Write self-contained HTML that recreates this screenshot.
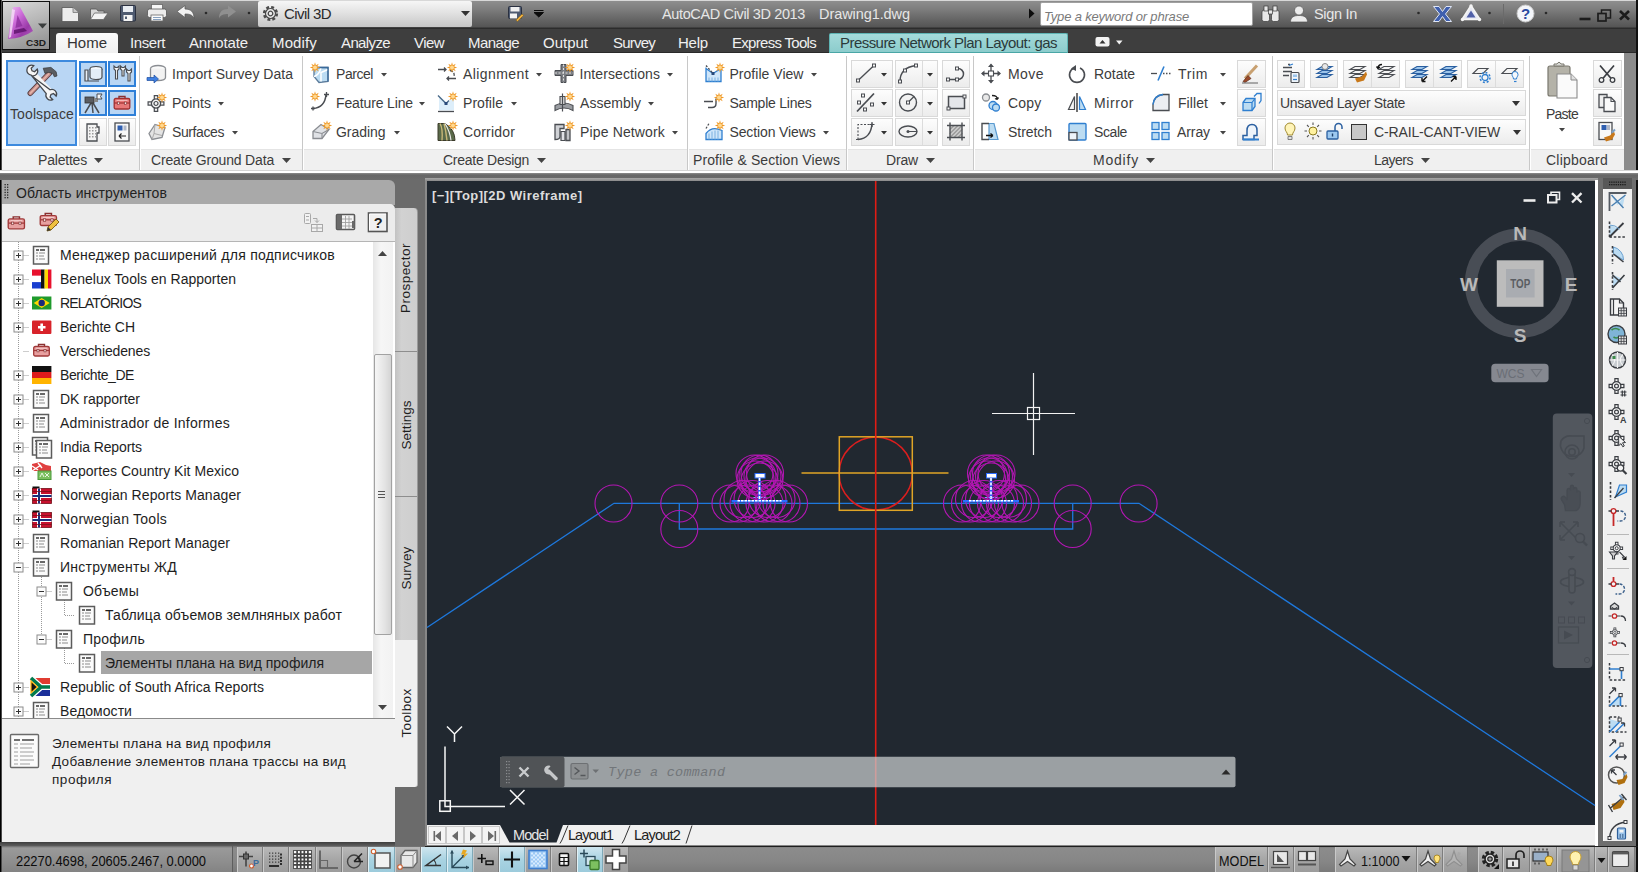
<!DOCTYPE html><html><head><meta charset="utf-8"><title>AutoCAD Civil 3D 2013 - Drawing1.dwg</title><style>
html,body{margin:0;padding:0;background:#6b6b6b;}
body{width:1638px;height:872px;position:relative;overflow:hidden;font-family:"Liberation Sans","DejaVu Sans",sans-serif;}
div,span,svg{position:absolute;box-sizing:border-box;}
span{white-space:nowrap;}
svg{overflow:visible;}
.rb{border:1px solid #d9d9d9;background:linear-gradient(#fdfdfd,#ececec);}
.sbg{background:linear-gradient(#b9b9b9,#a6a6a6 50%,#9c9c9c);border-left:1px solid #c9c9c9;border-right:1px solid #7d7d7d;}
.sbb{background:linear-gradient(#cfe6ef,#a9d3e2 50%,#9ccbdc);border-left:1px solid #e2f1f6;border-right:1px solid #7fa9b8;}
</style></head><body>
<div style="left:0px;top:0px;width:1638px;height:29px;background:linear-gradient(#d8d8d8 0,#d8d8d8 1px,#8e8e8e 1px,#7e7e7e 9px,#666 19px,#555 27px,#2c2c2c 28px,#2c2c2c 29px);"></div>
<div style="left:0px;top:29px;width:1638px;height:25px;background:linear-gradient(#3e3e3e 0,#3e3e3e 23px,#2a2a2a 23px);"></div>
<div style="left:1.5px;top:1px;width:48.5px;height:49px;background:linear-gradient(160deg,#dadada,#b8b8b8 45%,#8c8c8c);border:1.5px solid #101010;"></div>
<svg style="left:0px;top:0px;z-index:3;" width="1638" height="60" viewBox="0 0 1638 60"><defs><linearGradient id="pa" x1="0" y1="0" x2="1" y2="1"><stop offset="0" stop-color="#f0c8f4"/><stop offset=".35" stop-color="#d070dc"/><stop offset=".7" stop-color="#9a3aa8"/><stop offset="1" stop-color="#b060c0"/></linearGradient></defs><path d="M13 7h7l13 24q-10 7-25 8z" fill="url(#pa)"/><path d="M17.500 15l5 11-7 2z" fill="#8a2a9a" opacity=".75"/><path d="M14 30l10-2 3 3-13 3z" fill="#5a1068" opacity=".8"/><path d="M12 9l3 1-4 27-2 1z" fill="#f6e0f8" opacity=".8"/><path d="M38 23.500h9l-4.500 5z" fill="#3a3d3d"/><text x="26" y="46" font-family="Liberation Sans,sans-serif" font-weight="bold" font-size="9.500" fill="#1c1c1c" textLength="20" lengthAdjust="spacingAndGlyphs">C3D</text><path d="M62 7.500h11l5.500 5v9H62z" fill="#ececec" stroke="#555" stroke-width=".800"/><path d="M73 7.500v5h5.500" fill="#c8c8c8" stroke="#777" stroke-width=".800"/><path d="M90.500 9h6l1.500 2h6v8.500h-13.500z" fill="#d8d8d8" stroke="#555" stroke-width=".800"/><path d="M90.500 19.500l4-6.500h13.500l-4.500 6.500z" fill="#f4f4f4" stroke="#666" stroke-width=".800"/><rect x="120.500" y="5.500" width="15" height="15.500" rx="1" fill="#4e5a70" stroke="#2a3040" stroke-width="1"/><rect x="123" y="6" width="10" height="6" fill="#e8ecf2"/><rect x="123.500" y="15" width="9" height="6" fill="#f4f4f4"/><rect x="125" y="16.500" width="2" height="2.500" fill="#4e5a70"/><rect x="151.500" y="4.500" width="11" height="5" fill="#f6f6f6" stroke="#666" stroke-width=".800"/><rect x="147.500" y="9" width="19" height="8.500" rx="2" fill="#ececec" stroke="#555" stroke-width=".800"/><rect x="151" y="15" width="12" height="6" fill="#fafafa" stroke="#666" stroke-width=".800"/><path d="M153 17.500h8M153 19.500h8" stroke="#6a8ab0" stroke-width=".800"/><path d="M177 11.500l8-6v3.500c6 0 9 3 9 9.500-1.500-3.500-4-4.500-9-4.500v3.500z" fill="#f2f2f2" stroke="#555" stroke-width=".700"/><path d="M236 11.500l-8-6v3.500c-6 0-9 3-9 9.500 1.500-3.500 4-4.500 9-4.500v3.500z" fill="#909090"/><circle cx="206" cy="13" r="1.300" fill="#2a2a2a"/><circle cx="249" cy="13" r="1.300" fill="#2a2a2a"/></svg>
<div style="left:258px;top:1px;width:214px;height:26px;background:linear-gradient(#f6f6f6,#e2e2e2 45%,#c6c6c6);border-radius:2px;"></div>
<svg style="left:0px;top:0px;" width="1638" height="60" viewBox="0 0 1638 60"><g transform="translate(270.500,13.500)"><circle r="6" fill="none" stroke="#4a4a4a" stroke-width="3.200" stroke-dasharray="2.700 2"/><circle r="5" fill="#ececec" stroke="#4a4a4a" stroke-width="1.200"/><circle r="2.300" fill="#ececec" stroke="#4a4a4a" stroke-width="1.300"/></g><path d="M461 11h9l-4.500 5z" fill="#333"/><rect x="508.500" y="6.500" width="13" height="12" rx="1" fill="#4e5a70" stroke="#2a3040" stroke-width="1"/><rect x="510.500" y="7" width="9" height="4.500" fill="#f0f0f0"/><rect x="510" y="13.500" width="7" height="5" fill="#f4f4f4"/><path d="M516 20l6-6 1.500 1.500-6 6z" fill="#f0b040" stroke="#7a5a10" stroke-width=".500"/><path d="M534 10.500h9.500M534 12.500h9.500l-4.750 4.500z" fill="#0c0c0c" stroke="#0c0c0c" stroke-width="1"/><path d="M1029 8.500v10l5.500-5z" fill="#0c0c0c"/></svg>
<span style="left:284.0px;top:6.3px;font-size:15px;line-height:15px;color:#2a2a2a;letter-spacing:-0.584px;">Civil 3D</span>
<span style="left:662.0px;top:7.2px;font-size:14.5px;line-height:14.5px;color:#e6e6e6;letter-spacing:-0.367px;">AutoCAD Civil 3D 2013</span>
<span style="left:819.0px;top:7.2px;font-size:14.5px;line-height:14.5px;color:#e6e6e6;letter-spacing:-0.073px;">Drawing1.dwg</span>
<div style="left:1040px;top:2px;width:213px;height:24px;background:#fff;border:1px solid #a0a0a0;border-radius:2px;"></div>
<span style="left:1044.0px;top:9.5px;font-size:13px;line-height:13px;color:#7a7a7a;font-style:italic;letter-spacing:-0.180px;">Type a keyword or phrase</span>
<span style="left:1314.0px;top:7.2px;font-size:14.5px;line-height:14.5px;color:#e8e8e8;letter-spacing:-0.306px;">Sign In</span>
<svg style="left:0px;top:0px;" width="1638" height="60" viewBox="0 0 1638 60"><g fill="#e8e8e8" stroke="#3a3a3a" stroke-width=".700"><rect x="1262" y="10" width="7.500" height="11.500" rx="2"/><rect x="1271.500" y="10" width="7.500" height="11.500" rx="2"/><rect x="1264" y="6" width="4" height="5"/><rect x="1273" y="6" width="4" height="5"/><rect x="1268.500" y="10" width="4" height="4"/></g><g fill="#ececec" stroke="#555" stroke-width=".700"><circle cx="1299" cy="10.500" r="4.500"/><path d="M1290.500 22c0-5 3.500-6.500 8.500-6.500s8.500 1.500 8.500 6.500z"/></g><circle cx="1418.500" cy="13" r="1.300" fill="#2a2a2a"/><circle cx="1489.500" cy="13" r="1.300" fill="#2a2a2a"/><circle cx="1546" cy="13" r="1.300" fill="#2a2a2a"/><path d="M1433.500 6.500h5.500l3.500 5 3.500-5h5.500l-6 7.500 6 7.500h-5.500l-3.500-5-3.500 5h-5.500l6-7.500z" fill="#3f5fae" stroke="#dfe6f5" stroke-width="1"/><path d="M1471 5.500l9 14h-18z" fill="#e8eaf4" stroke="#f4f4f4" stroke-width="1.600" stroke-linejoin="round"/><path d="M1471 10.500l4.500 7h-9z" fill="#5060a8"/><circle cx="1471" cy="6" r="1.700" fill="#f4f4f4"/><circle cx="1462.500" cy="19.500" r="1.700" fill="#f4f4f4"/><circle cx="1479.500" cy="19.500" r="1.700" fill="#f4f4f4"/><path d="M1503.500 4v20" stroke="#6a6a6a" stroke-width="1"/><circle cx="1525.500" cy="13.500" r="8.500" fill="#f4f6fa" stroke="#c8c8c8" stroke-width="1"/><text x="1525.500" y="19" text-anchor="middle" font-family="Liberation Sans,sans-serif" font-weight="bold" font-size="15" fill="#2a4aa0">?</text><path d="M1579.500 19h11" stroke="#1c1c1c" stroke-width="2.600"/><rect x="1598" y="13.500" width="8" height="7.500" fill="none" stroke="#1c1c1c" stroke-width="1.700"/><path d="M1601.500 13v-3h9v8h-3.500" fill="none" stroke="#1c1c1c" stroke-width="1.500"/><path d="M1620 11l9 8.500M1629 11l-9 8.500" stroke="#1c1c1c" stroke-width="2.600"/><rect x="1095.500" y="37" width="14" height="9.500" rx="2" fill="#f2f2f2"/><path d="M1099.500 43.500h6l-3-3.500z" fill="#333"/><path d="M1116 40.500h6.500l-3.250 4z" fill="#f2f2f2"/></svg>
<div style="left:56px;top:33px;width:62px;height:21px;background:linear-gradient(#fbfbfb,#efefef);border-radius:3px 3px 0 0;"></div>
<span style="left:67.0px;top:34.8px;font-size:15px;line-height:15px;color:#333;letter-spacing:-0.003px;">Home</span>
<span style="left:130.0px;top:34.8px;font-size:15px;line-height:15px;color:#f0f0f0;letter-spacing:-0.419px;">Insert</span>
<span style="left:189.0px;top:34.8px;font-size:15px;line-height:15px;color:#f0f0f0;letter-spacing:-0.131px;">Annotate</span>
<span style="left:272.0px;top:34.8px;font-size:15px;line-height:15px;color:#f0f0f0;letter-spacing:0.137px;">Modify</span>
<span style="left:341.0px;top:34.8px;font-size:15px;line-height:15px;color:#f0f0f0;letter-spacing:-0.623px;">Analyze</span>
<span style="left:414.0px;top:34.8px;font-size:15px;line-height:15px;color:#f0f0f0;letter-spacing:-0.561px;">View</span>
<span style="left:468.0px;top:34.8px;font-size:15px;line-height:15px;color:#f0f0f0;letter-spacing:-0.534px;">Manage</span>
<span style="left:543.0px;top:34.8px;font-size:15px;line-height:15px;color:#f0f0f0;letter-spacing:-0.005px;">Output</span>
<span style="left:613.0px;top:34.8px;font-size:15px;line-height:15px;color:#f0f0f0;letter-spacing:-0.781px;">Survey</span>
<span style="left:678.0px;top:34.8px;font-size:15px;line-height:15px;color:#f0f0f0;letter-spacing:-0.213px;">Help</span>
<span style="left:732.0px;top:34.8px;font-size:15px;line-height:15px;color:#f0f0f0;letter-spacing:-0.700px;">Express Tools</span>
<div style="left:829px;top:33px;width:239px;height:21px;background:linear-gradient(#a4dada,#8ccccc);border:1px solid #5fb4b4;border-bottom:2px solid #4aa6a6;border-radius:2px 2px 0 0;"></div>
<span style="left:840.0px;top:34.8px;font-size:15px;line-height:15px;color:#2b3a3a;letter-spacing:-0.549px;">Pressure Network Plan Layout: gas</span>
<div style="left:2px;top:53px;width:1622px;height:118px;background:#fff;"></div>
<div style="left:2px;top:149px;width:1622px;height:22px;background:#f0f0f0;border-top:1px solid #e4e4e4;"></div>
<div style="left:1624px;top:53px;width:12px;height:120px;background:#8c8c8c;"></div>
<div style="left:1636px;top:0px;width:2px;height:872px;background:#111;"></div>
<div style="left:0px;top:0px;width:2px;height:872px;background:linear-gradient(90deg,#000 0,#000 1px,#4a4a4a 1px);"></div>
<div style="left:0px;top:170px;width:1638px;height:10px;background:linear-gradient(#d4d4d4 0,#d4d4d4 1px,#fff 1px,#fff 2.5px,#8c8c8c 3px,#666 5px,#6b6b6b 100%);"></div>
<div style="left:139px;top:56px;width:2px;height:114px;background:linear-gradient(90deg,#c8c8c8 0,#c8c8c8 1px,#fff 1px);"></div>
<div style="left:301.5px;top:56px;width:2px;height:114px;background:linear-gradient(90deg,#c8c8c8 0,#c8c8c8 1px,#fff 1px);"></div>
<div style="left:686.5px;top:56px;width:2px;height:114px;background:linear-gradient(90deg,#c8c8c8 0,#c8c8c8 1px,#fff 1px);"></div>
<div style="left:846px;top:56px;width:2px;height:114px;background:linear-gradient(90deg,#c8c8c8 0,#c8c8c8 1px,#fff 1px);"></div>
<div style="left:973px;top:56px;width:2px;height:114px;background:linear-gradient(90deg,#c8c8c8 0,#c8c8c8 1px,#fff 1px);"></div>
<div style="left:1272px;top:56px;width:2px;height:114px;background:linear-gradient(90deg,#c8c8c8 0,#c8c8c8 1px,#fff 1px);"></div>
<div style="left:1529px;top:56px;width:2px;height:114px;background:linear-gradient(90deg,#c8c8c8 0,#c8c8c8 1px,#fff 1px);"></div>
<div style="left:6px;top:60px;width:71px;height:86px;background:#b9d6f4;border:2px solid #3d8ade;"></div>
<span style="left:10.0px;top:107.1px;font-size:14px;line-height:14px;color:#3c3c3c;letter-spacing:0.107px;">Toolspace</span>
<div style="left:79px;top:61px;width:28px;height:26px;background:#b9d6f4;border:2px solid #2f80d8;"></div>
<div style="left:108px;top:61px;width:28px;height:26px;background:#b9d6f4;border:2px solid #2f80d8;"></div>
<div style="left:79px;top:90px;width:28px;height:26px;background:#b9d6f4;border:2px solid #2f80d8;"></div>
<div style="left:108px;top:90px;width:28px;height:26px;background:#b9d6f4;border:2px solid #2f80d8;"></div>
<div class="rb" style="left:79px;top:118px;width:28px;height:28px;"></div>
<div class="rb" style="left:108px;top:118px;width:28px;height:28px;"></div>
<span style="left:172.0px;top:67.1px;font-size:14px;line-height:14px;color:#3c3c3c;letter-spacing:0.022px;">Import Survey Data</span>
<span style="left:172.0px;top:96.1px;font-size:14px;line-height:14px;color:#3c3c3c;letter-spacing:0.015px;">Points</span>
<svg style="left:218px;top:102.0px;" width="6" height="4" viewBox="0 0 6 4"><path d="M0 0h6l-3 3.6z" fill="#444"/></svg>
<span style="left:172.0px;top:125.1px;font-size:14px;line-height:14px;color:#3c3c3c;letter-spacing:-0.406px;">Surfaces</span>
<svg style="left:231.5px;top:131.0px;" width="6" height="4" viewBox="0 0 6 4"><path d="M0 0h6l-3 3.6z" fill="#444"/></svg>
<span style="left:336.0px;top:67.1px;font-size:14px;line-height:14px;color:#3c3c3c;letter-spacing:-0.447px;">Parcel</span>
<svg style="left:381px;top:73.0px;" width="6" height="4" viewBox="0 0 6 4"><path d="M0 0h6l-3 3.6z" fill="#444"/></svg>
<span style="left:336.0px;top:96.1px;font-size:14px;line-height:14px;color:#3c3c3c;letter-spacing:-0.134px;">Feature Line</span>
<svg style="left:419px;top:102.0px;" width="6" height="4" viewBox="0 0 6 4"><path d="M0 0h6l-3 3.6z" fill="#444"/></svg>
<span style="left:336.0px;top:125.1px;font-size:14px;line-height:14px;color:#3c3c3c;letter-spacing:-0.044px;">Grading</span>
<svg style="left:393.5px;top:131.0px;" width="6" height="4" viewBox="0 0 6 4"><path d="M0 0h6l-3 3.6z" fill="#444"/></svg>
<span style="left:463.0px;top:67.1px;font-size:14px;line-height:14px;color:#3c3c3c;letter-spacing:0.416px;">Alignment</span>
<svg style="left:536px;top:73.0px;" width="6" height="4" viewBox="0 0 6 4"><path d="M0 0h6l-3 3.6z" fill="#444"/></svg>
<span style="left:463.0px;top:96.1px;font-size:14px;line-height:14px;color:#3c3c3c;letter-spacing:0.045px;">Profile</span>
<svg style="left:510.5px;top:102.0px;" width="6" height="4" viewBox="0 0 6 4"><path d="M0 0h6l-3 3.6z" fill="#444"/></svg>
<span style="left:463.0px;top:125.1px;font-size:14px;line-height:14px;color:#3c3c3c;letter-spacing:0.179px;">Corridor</span>
<span style="left:579.5px;top:67.1px;font-size:14px;line-height:14px;color:#3c3c3c;letter-spacing:0.087px;">Intersections</span>
<svg style="left:667px;top:73.0px;" width="6" height="4" viewBox="0 0 6 4"><path d="M0 0h6l-3 3.6z" fill="#444"/></svg>
<span style="left:580.0px;top:96.1px;font-size:14px;line-height:14px;color:#3c3c3c;letter-spacing:0.040px;">Assembly</span>
<svg style="left:648px;top:102.0px;" width="6" height="4" viewBox="0 0 6 4"><path d="M0 0h6l-3 3.6z" fill="#444"/></svg>
<span style="left:580.0px;top:125.1px;font-size:14px;line-height:14px;color:#3c3c3c;letter-spacing:0.145px;">Pipe Network</span>
<svg style="left:672px;top:131.0px;" width="6" height="4" viewBox="0 0 6 4"><path d="M0 0h6l-3 3.6z" fill="#444"/></svg>
<span style="left:729.5px;top:67.1px;font-size:14px;line-height:14px;color:#3c3c3c;letter-spacing:0.028px;">Profile View</span>
<svg style="left:811px;top:73.0px;" width="6" height="4" viewBox="0 0 6 4"><path d="M0 0h6l-3 3.6z" fill="#444"/></svg>
<span style="left:729.5px;top:96.1px;font-size:14px;line-height:14px;color:#3c3c3c;letter-spacing:-0.236px;">Sample Lines</span>
<span style="left:729.5px;top:125.1px;font-size:14px;line-height:14px;color:#3c3c3c;letter-spacing:-0.129px;">Section Views</span>
<svg style="left:823px;top:131.0px;" width="6" height="4" viewBox="0 0 6 4"><path d="M0 0h6l-3 3.6z" fill="#444"/></svg>
<span style="left:1008.0px;top:67.1px;font-size:14px;line-height:14px;color:#3c3c3c;letter-spacing:0.441px;">Move</span>
<span style="left:1008.0px;top:96.1px;font-size:14px;line-height:14px;color:#3c3c3c;letter-spacing:0.204px;">Copy</span>
<span style="left:1008.0px;top:125.1px;font-size:14px;line-height:14px;color:#3c3c3c;letter-spacing:-0.050px;">Stretch</span>
<span style="left:1094.0px;top:67.1px;font-size:14px;line-height:14px;color:#3c3c3c;letter-spacing:-0.041px;">Rotate</span>
<span style="left:1094.0px;top:96.1px;font-size:14px;line-height:14px;color:#3c3c3c;letter-spacing:0.576px;">Mirror</span>
<span style="left:1094.0px;top:125.1px;font-size:14px;line-height:14px;color:#3c3c3c;letter-spacing:-0.404px;">Scale</span>
<span style="left:1178.0px;top:67.1px;font-size:14px;line-height:14px;color:#3c3c3c;letter-spacing:0.633px;">Trim</span>
<svg style="left:1220px;top:73.0px;" width="6" height="4" viewBox="0 0 6 4"><path d="M0 0h6l-3 3.6z" fill="#444"/></svg>
<span style="left:1178.0px;top:96.1px;font-size:14px;line-height:14px;color:#3c3c3c;letter-spacing:0.073px;">Fillet</span>
<svg style="left:1220px;top:102.0px;" width="6" height="4" viewBox="0 0 6 4"><path d="M0 0h6l-3 3.6z" fill="#444"/></svg>
<span style="left:1177.0px;top:125.1px;font-size:14px;line-height:14px;color:#3c3c3c;letter-spacing:-0.090px;">Array</span>
<svg style="left:1220px;top:131.0px;" width="6" height="4" viewBox="0 0 6 4"><path d="M0 0h6l-3 3.6z" fill="#444"/></svg>
<span style="left:38.0px;top:153.1px;font-size:14px;line-height:14px;color:#3c3c3c;letter-spacing:-0.198px;">Palettes</span>
<svg style="left:94.0px;top:158px;" width="9" height="5" viewBox="0 0 9 5"><path d="M0 0h9l-4.5 5z" fill="#444"/></svg>
<span style="left:151.0px;top:153.1px;font-size:14px;line-height:14px;color:#3c3c3c;letter-spacing:-0.170px;">Create Ground Data</span>
<svg style="left:282.0px;top:158px;" width="9" height="5" viewBox="0 0 9 5"><path d="M0 0h9l-4.5 5z" fill="#444"/></svg>
<span style="left:443.0px;top:153.1px;font-size:14px;line-height:14px;color:#3c3c3c;letter-spacing:-0.268px;">Create Design</span>
<svg style="left:536.5px;top:158px;" width="9" height="5" viewBox="0 0 9 5"><path d="M0 0h9l-4.5 5z" fill="#444"/></svg>
<span style="left:693.0px;top:153.1px;font-size:14px;line-height:14px;color:#3c3c3c;letter-spacing:0.110px;">Profile &amp; Section Views</span>
<span style="left:886.0px;top:153.1px;font-size:14px;line-height:14px;color:#3c3c3c;letter-spacing:-0.168px;">Draw</span>
<svg style="left:925.5px;top:158px;" width="9" height="5" viewBox="0 0 9 5"><path d="M0 0h9l-4.5 5z" fill="#444"/></svg>
<span style="left:1093.0px;top:153.1px;font-size:14px;line-height:14px;color:#3c3c3c;letter-spacing:0.794px;">Modify</span>
<svg style="left:1145.5px;top:158px;" width="9" height="5" viewBox="0 0 9 5"><path d="M0 0h9l-4.5 5z" fill="#444"/></svg>
<span style="left:1374.0px;top:153.1px;font-size:14px;line-height:14px;color:#3c3c3c;letter-spacing:-0.503px;">Layers</span>
<svg style="left:1420.5px;top:158px;" width="9" height="5" viewBox="0 0 9 5"><path d="M0 0h9l-4.5 5z" fill="#444"/></svg>
<span style="left:1546.0px;top:153.1px;font-size:14px;line-height:14px;color:#3c3c3c;letter-spacing:0.231px;">Clipboard</span>
<div class="rb" style="left:851px;top:60px;width:42px;height:28px;"></div>
<svg style="left:881px;top:72.5px;" width="6" height="4" viewBox="0 0 6 4"><path d="M0 0h6l-3 3.6z" fill="#333"/></svg>
<div class="rb" style="left:895px;top:60px;width:43px;height:28px;"></div>
<div style="left:922px;top:61px;width:1px;height:26px;background:#dcdcdc;"></div>
<svg style="left:927px;top:72.5px;" width="6" height="4" viewBox="0 0 6 4"><path d="M0 0h6l-3 3.6z" fill="#333"/></svg>
<div class="rb" style="left:942px;top:60px;width:28px;height:28px;"></div>
<div class="rb" style="left:1237px;top:60px;width:29px;height:28px;"></div>
<div class="rb" style="left:1593px;top:60px;width:29px;height:28px;"></div>
<div class="rb" style="left:851px;top:89px;width:42px;height:28px;"></div>
<svg style="left:881px;top:101.5px;" width="6" height="4" viewBox="0 0 6 4"><path d="M0 0h6l-3 3.6z" fill="#333"/></svg>
<div class="rb" style="left:895px;top:89px;width:43px;height:28px;"></div>
<div style="left:922px;top:90px;width:1px;height:26px;background:#dcdcdc;"></div>
<svg style="left:927px;top:101.5px;" width="6" height="4" viewBox="0 0 6 4"><path d="M0 0h6l-3 3.6z" fill="#333"/></svg>
<div class="rb" style="left:942px;top:89px;width:28px;height:28px;"></div>
<div class="rb" style="left:1237px;top:89px;width:29px;height:28px;"></div>
<div class="rb" style="left:1593px;top:89px;width:29px;height:28px;"></div>
<div class="rb" style="left:851px;top:118px;width:42px;height:28px;"></div>
<svg style="left:881px;top:130.5px;" width="6" height="4" viewBox="0 0 6 4"><path d="M0 0h6l-3 3.6z" fill="#333"/></svg>
<div class="rb" style="left:895px;top:118px;width:43px;height:28px;"></div>
<div style="left:922px;top:119px;width:1px;height:26px;background:#dcdcdc;"></div>
<svg style="left:927px;top:130.5px;" width="6" height="4" viewBox="0 0 6 4"><path d="M0 0h6l-3 3.6z" fill="#333"/></svg>
<div class="rb" style="left:942px;top:118px;width:28px;height:28px;"></div>
<div class="rb" style="left:1237px;top:118px;width:29px;height:28px;"></div>
<div class="rb" style="left:1593px;top:118px;width:29px;height:28px;"></div>
<div class="rb" style="left:1277px;top:60px;width:28px;height:28px;"></div>
<div class="rb" style="left:1310px;top:60px;width:28px;height:28px;"></div>
<div class="rb" style="left:1343px;top:60px;width:57px;height:28px;"></div>
<div style="left:1371px;top:61px;width:1px;height:26px;background:#dcdcdc;"></div>
<div class="rb" style="left:1405px;top:60px;width:57px;height:28px;"></div>
<div style="left:1433px;top:61px;width:1px;height:26px;background:#dcdcdc;"></div>
<div class="rb" style="left:1467px;top:60px;width:57px;height:28px;"></div>
<div style="left:1495px;top:61px;width:1px;height:26px;background:#dcdcdc;"></div>
<div class="rb" style="left:1277px;top:90px;width:249px;height:26px;"></div>
<div class="rb" style="left:1277px;top:119px;width:249px;height:26px;"></div>
<span style="left:1280.0px;top:96.1px;font-size:14px;line-height:14px;color:#3c3c3c;letter-spacing:-0.302px;">Unsaved Layer State</span>
<span style="left:1374.0px;top:125.1px;font-size:14px;line-height:14px;color:#3c3c3c;letter-spacing:-0.146px;">C-RAIL-CANT-VIEW</span>
<svg style="left:1512px;top:100.5px;" width="8" height="5" viewBox="0 0 8 5"><path d="M0 0h8l-4 5z" fill="#333"/></svg>
<svg style="left:1513px;top:129.5px;" width="8" height="5" viewBox="0 0 8 5"><path d="M0 0h8l-4 5z" fill="#333"/></svg>
<div style="left:1351px;top:124px;width:16px;height:16px;background:#c8c8c8;border:1px solid #333;"></div>
<span style="left:1546.0px;top:107.1px;font-size:14px;line-height:14px;color:#3c3c3c;letter-spacing:-0.760px;">Paste</span>
<svg style="left:1559px;top:127.5px;" width="6" height="4" viewBox="0 0 6 4"><path d="M0 0h6l-3 3.6z" fill="#444"/></svg>
<svg style="left:0px;top:0px;" width="1638" height="872" viewBox="0 0 1638 872"><g transform="translate(41.5,82)"><g transform="scale(.86)"><path d="M-13 13L9 -10" stroke="#5a4040" stroke-width="6.500" stroke-linecap="round"/><path d="M-13 13L9 -10" stroke="#c89090" stroke-width="4.300" stroke-linecap="round"/><path d="M-13 13L9 -10" stroke="#e8b8a8" stroke-width="1.500" stroke-linecap="round"/><path d="M2 -16l9-1 6 5 1 5-3 1-2-4-5-1-4 1z" fill="#5a5d62" stroke="#333" stroke-width=".800"/><path d="M-12 -13L11 11" stroke="#f4f4f4" stroke-width="5" stroke-linecap="round"/><path d="M-12 -13L11 11" fill="none" stroke="#6a6d72" stroke-width="6.500" stroke-linecap="round" opacity=".0"/><path d="M-17 -14a5.500 5.500 0 0 1 8-5l-3 3 1 3 3 1 3-3a5.500 5.500 0 0 1-7 7.500L10 9a5.500 5.500 0 0 1 7 7.500l-3-3-3 1-1 3 3 3a5.500 5.500 0 0 1-7.500-7L-12 -8a5.500 5.500 0 0 1-5-6z" fill="#f6f6f6" stroke="#45484d" stroke-width="1.500"/></g></g><g transform="translate(93,74)"><path d="M-8 -4h3v11h-3zM-8 7h14" fill="#e8f0f8" stroke="#4a4d52" stroke-width="1.200"/><ellipse cx="3" cy="-5" rx="6" ry="2.500" fill="#f4f8fc" stroke="#4a4d52" stroke-width="1.200"/><path d="M-3 -5v8c0 1.500 2.500 2.500 6 2.500s6-1 6-2.500v-8" fill="#e4eef8" stroke="#4a4d52" stroke-width="1.200"/></g><g transform="translate(122,74)"><g fill="#f4f4f4" stroke="#4a4d52" stroke-width="1.100"><path d="M-8 -8v3l1.500 1.500v8.500h2v-8.500l1.500-1.500v-3l-1.500 1.500h-2z"/><path d="M-1.500 -8v3l1.500 1.500v5.500h2v-5.500l1.500-1.500v-3l-1.500 1.500h-2z"/><path d="M4.500 -5v3l1.500 1.500v7.500h2v-7.500l1.500-1.500v-3l-1.500 1.500h-2z"/></g></g><g transform="translate(93,103)"><path d="M-2 0l-6 10M-1 0l1 10M0 0l6 10" stroke="#4a4d52" stroke-width="1.500" fill="none"/><rect x="-8" y="-6" width="9" height="6" fill="#5a5d62" stroke="#333" stroke-width=".800"/><path d="M1 -5h4v4h-4z" fill="#888"/><path d="M4 -9h5l-1.500 2.500 1.500 2.500h-5z" fill="#f4f4f4" stroke="#4a4d52" stroke-width="1"/></g><g transform="translate(122,103)"><g transform="translate(-8.500,-8)"><path d="M5.500 3.500v-2h6v2" fill="none" stroke="#8a3030" stroke-width="1.400"/><rect x=".700" y="3.500" width="15.600" height="10.500" rx="1.500" fill="#e87878" stroke="#a03030" stroke-width="1.300"/><path d="M.700 8h15.600" stroke="#a03030" stroke-width="1.200"/><path d="M3 5.400h11" stroke="#f6c0c0" stroke-width="1"/><rect x="4" y="7" width="2" height="2.400" fill="#f4e0e0" stroke="#803030" stroke-width=".600"/><rect x="11" y="7" width="2" height="2.400" fill="#f4e0e0" stroke="#803030" stroke-width=".600"/></g></g><g transform="translate(93,132)"><path d="M-6 -8h10v3h2v6h-2v8h-10z" fill="#f4f4f4" stroke="#4a4d52" stroke-width="1.300"/><rect x="-4" y="-5" width="1.500" height="1.500" fill="#999"/><rect x="-4" y="-2" width="1.500" height="1.500" fill="#999"/><rect x="-4" y="1" width="1.500" height="1.500" fill="#999"/><rect x="-4" y="4" width="1.500" height="1.500" fill="#999"/><rect x="-1" y="-5" width="1.500" height="1.500" fill="#999"/><rect x="-1" y="-2" width="1.500" height="1.500" fill="#999"/><rect x="-1" y="1" width="1.500" height="1.500" fill="#999"/><rect x="-1" y="4" width="1.500" height="1.500" fill="#999"/><rect x="2" y="-5" width="1.500" height="1.500" fill="#999"/><rect x="2" y="-2" width="1.500" height="1.500" fill="#999"/><rect x="2" y="1" width="1.500" height="1.500" fill="#999"/><rect x="2" y="4" width="1.500" height="1.500" fill="#999"/></g><g transform="translate(122,132)"><rect x="-7" y="-9" width="14" height="18" fill="#f8f8f8" stroke="#4a4d52" stroke-width="1.300"/><rect x="-4.500" y="-6.500" width="5" height="5" fill="#2f5fb0"/><rect x="1.500" y="-6.500" width="3" height="5" fill="#b0b8c8"/><path d="M4 4h-7M-3 4l2.500-2.500M-3 4l2.500 2.500" stroke="#222" stroke-width="1.200" fill="none"/></g><g transform="translate(157,73.5)"><ellipse cx="1" cy="-5" rx="7.500" ry="3" fill="#fafafa" stroke="#8a8d92" stroke-width="1.300"/><path d="M-6.500 -5v9c0 2 3.500 3 7.500 3s7.500-1 7.500-3v-9" fill="#f2f2f2" stroke="#8a8d92" stroke-width="1.300"/><path d="M-10 4h7v-2.500l4.500 4-4.500 4v-2.500h-7z" fill="#3f7fe0" stroke="#1d4fa0" stroke-width=".700"/></g><g transform="translate(156,103.5)"><path d="M0 -8.500V8.500M-8.500 0H8.500" stroke="#4a4d52" stroke-width="4.600"/><path d="M0 -7.300V7.300M-7.300 0H7.300" stroke="#f4f4f4" stroke-width="2.200"/><circle r="4.600" fill="#f4f4f4" stroke="#4a4d52" stroke-width="1.300"/><circle r="2" fill="#f4f4f4" stroke="#4a4d52" stroke-width="1.200"/><polygon points="11.2,-6.0 8.2,-5.1 9.7,-2.3 6.9,-3.8 6.0,-0.8 5.1,-3.8 2.3,-2.3 3.8,-5.1 0.8,-6.0 3.8,-6.9 2.3,-9.7 5.1,-8.2 6.0,-11.2 6.9,-8.2 9.7,-9.7 8.2,-6.9" fill="#f09a28"/><circle cx="6" cy="-6" r="2.0" fill="#ffd890"/></g><g transform="translate(157,131.5)"><path d="M-8 2l6-9 10 3-3 10-10 2z" fill="#e4e4e4" stroke="#8a8d92" stroke-width="1.300"/><path d="M-2 -7l-1 9 8 2M-3 2l-2 6" fill="none" stroke="#aaa" stroke-width="1"/><polygon points="10.2,-6.0 7.2,-5.1 8.7,-2.3 5.9,-3.8 5.0,-0.8 4.1,-3.8 1.3,-2.3 2.8,-5.1 -0.2,-6.0 2.8,-6.9 1.3,-9.7 4.1,-8.2 5.0,-11.2 5.9,-8.2 8.7,-9.7 7.2,-6.9" fill="#f09a28"/><circle cx="5" cy="-6" r="2.0" fill="#ffd890"/></g><g transform="translate(321,73.5)"><path d="M-7 -6h14v14l-9 1-5-6z" fill="#bcdcf2" stroke="#5a7a9a" stroke-width="1.300"/><path d="M0 -6q-2 8-7 9M0 8v-9l7-3" fill="none" stroke="#fff" stroke-width="1.500"/><path d="M-7 -6h14v14" fill="none" stroke="#3a6a9a" stroke-width="1.300"/><polygon points="-0.8,-6.0 -3.8,-5.1 -2.3,-2.3 -5.1,-3.8 -6.0,-0.8 -6.9,-3.8 -9.7,-2.3 -8.2,-5.1 -11.2,-6.0 -8.2,-6.9 -9.7,-9.7 -6.9,-8.2 -6.0,-11.2 -5.1,-8.2 -2.3,-9.7 -3.8,-6.9" fill="#f09a28"/><circle cx="-6" cy="-6" r="2.0" fill="#ffd890"/></g><g transform="translate(321,102.5)"><path d="M-8 6q12-1 13-14" fill="none" stroke="#4a4d52" stroke-width="1.500"/><path d="M-10 6h4M-8 4v4M3 -8h5M5.500 -10.500v5" stroke="#4a4d52" stroke-width="1.300"/><polygon points="-0.8,-6.0 -3.8,-5.1 -2.3,-2.3 -5.1,-3.8 -6.0,-0.8 -6.9,-3.8 -9.7,-2.3 -8.2,-5.1 -11.2,-6.0 -8.2,-6.9 -9.7,-9.7 -6.9,-8.2 -6.0,-11.2 -5.1,-8.2 -2.3,-9.7 -3.8,-6.9" fill="#f09a28"/><circle cx="-6" cy="-6" r="2.0" fill="#ffd890"/></g><g transform="translate(321,131.5)"><path d="M-8 0l8-7 8 5-7 9h-9z" fill="#e0e2e6" stroke="#8a8d92" stroke-width="1.300"/><path d="M-8 0l9 2 7-4M1 2v5" fill="none" stroke="#8a8d92" stroke-width="1.100"/><polygon points="11.2,-6.0 8.2,-5.1 9.7,-2.3 6.9,-3.8 6.0,-0.8 5.1,-3.8 2.3,-2.3 3.8,-5.1 0.8,-6.0 3.8,-6.9 2.3,-9.7 5.1,-8.2 6.0,-11.2 6.9,-8.2 9.7,-9.7 8.2,-6.9" fill="#f09a28"/><circle cx="6" cy="-6" r="2.0" fill="#ffd890"/></g><g transform="translate(447,73.5)"><path d="M-9 -4h8M-3 -6l2 2-2 2M9 5h-9M2 3l-2 2 2 2" fill="none" stroke="#4a4d52" stroke-width="1.300"/><path d="M3 -3q5 1 4 6" fill="none" stroke="#4a4d52" stroke-width="1.300" stroke-dasharray="3 1.500"/><polygon points="10.2,-6.0 7.2,-5.1 8.7,-2.3 5.9,-3.8 5.0,-0.8 4.1,-3.8 1.3,-2.3 2.8,-5.1 -0.2,-6.0 2.8,-6.9 1.3,-9.7 4.1,-8.2 5.0,-11.2 5.9,-8.2 8.7,-9.7 7.2,-6.9" fill="#f09a28"/><circle cx="5" cy="-6" r="2.0" fill="#ffd890"/></g><g transform="translate(447,102.5)"><path d="M-8 8V-6l8 6 7-5v13z" fill="#ddeefa"/><path d="M-9 -7l8 8 3-3" fill="none" stroke="#4a6a8a" stroke-width="1.400"/><rect x="-2.500" y="-.500" width="3" height="3" fill="#2a4a7a"/><path d="M-9 9h16" stroke="#4a4d52" stroke-width="1.300"/><polygon points="11.2,-6.0 8.2,-5.1 9.7,-2.3 6.9,-3.8 6.0,-0.8 5.1,-3.8 2.3,-2.3 3.8,-5.1 0.8,-6.0 3.8,-6.9 2.3,-9.7 5.1,-8.2 6.0,-11.2 6.9,-8.2 9.7,-9.7 8.2,-6.9" fill="#f09a28"/><circle cx="6" cy="-6" r="2.0" fill="#ffd890"/></g><g transform="translate(447,131.5)"><path d="M-9 9V-8h7q10 6 10 17z" fill="#5a6a4a" stroke="#3a3a2a" stroke-width="1"/><path d="M-5 9q1-12-2-17M0 9q-1-10-3-17" fill="none" stroke="#c8b878" stroke-width="1.400"/><path d="M4 9q-1-9-6-17" fill="none" stroke="#e8e8e8" stroke-width="1.200"/><polygon points="11.2,-6.0 8.2,-5.1 9.7,-2.3 6.9,-3.8 6.0,-0.8 5.1,-3.8 2.3,-2.3 3.8,-5.1 0.8,-6.0 3.8,-6.9 2.3,-9.7 5.1,-8.2 6.0,-11.2 6.9,-8.2 9.7,-9.7 8.2,-6.9" fill="#f09a28"/><circle cx="6" cy="-6" r="2.0" fill="#ffd890"/></g><g transform="translate(564,73.5)"><path d="M-9 -3h6v-6h5v6h7v5h-7v7h-5v-7h-6z" fill="#7a7d82" stroke="#4a4d52" stroke-width="1"/><path d="M-9 -.500h18M-.500 -9v18" stroke="#e0e0e0" stroke-width="1" stroke-dasharray="2 1.500"/><polygon points="11.2,-6.0 8.2,-5.1 9.7,-2.3 6.9,-3.8 6.0,-0.8 5.1,-3.8 2.3,-2.3 3.8,-5.1 0.8,-6.0 3.8,-6.9 2.3,-9.7 5.1,-8.2 6.0,-11.2 6.9,-8.2 9.7,-9.7 8.2,-6.9" fill="#f09a28"/><circle cx="6" cy="-6" r="2.0" fill="#ffd890"/></g><g transform="translate(564,102.5)"><path d="M-9 3q9-5 18 0v5q-9-5-18 0z" fill="#9a9da2" stroke="#4a4d52" stroke-width="1.100"/><path d="M-4 -6h5v8h-5z" fill="#d8d8d8" stroke="#4a4d52" stroke-width="1.100"/><path d="M-1.500 -9v18" stroke="#4a4d52" stroke-width="1.200"/><polygon points="11.2,-6.0 8.2,-5.1 9.7,-2.3 6.9,-3.8 6.0,-0.8 5.1,-3.8 2.3,-2.3 3.8,-5.1 0.8,-6.0 3.8,-6.9 2.3,-9.7 5.1,-8.2 6.0,-11.2 6.9,-8.2 9.7,-9.7 8.2,-6.9" fill="#f09a28"/><circle cx="6" cy="-6" r="2.0" fill="#ffd890"/></g><g transform="translate(564,131.5)"><path d="M-9 -7h9v4h-4v8q0 3-5 3z" fill="#d0d2d6" stroke="#4a4d52" stroke-width="1.300"/><path d="M2 -2h4v11h-4z" fill="#c0c2c6" stroke="#4a4d52" stroke-width="1.300"/><path d="M-3 0h4v9h-4z" fill="#e0e2e6" stroke="#4a4d52" stroke-width="1.200"/><polygon points="11.2,-6.0 8.2,-5.1 9.7,-2.3 6.9,-3.8 6.0,-0.8 5.1,-3.8 2.3,-2.3 3.8,-5.1 0.8,-6.0 3.8,-6.9 2.3,-9.7 5.1,-8.2 6.0,-11.2 6.9,-8.2 9.7,-9.7 8.2,-6.9" fill="#f09a28"/><circle cx="6" cy="-6" r="2.0" fill="#ffd890"/></g><g transform="translate(714,73.5)"><path d="M-8 8V-5l7 5 8-5v13z" fill="#cfe6fa" stroke="#2f7fd0" stroke-width="1.300"/><path d="M-8 -8l7 8" stroke="#4a4d52" stroke-width="1.300" stroke-dasharray="2 1.500"/><rect x="-2.500" y="-1.500" width="3" height="3" fill="#2a4a7a"/><path d="M-5 8v-4M-2 8v-4M1 8v-4M4 8v-4" stroke="#7ab0e0" stroke-width="1"/><polygon points="11.2,-6.0 8.2,-5.1 9.7,-2.3 6.9,-3.8 6.0,-0.8 5.1,-3.8 2.3,-2.3 3.8,-5.1 0.8,-6.0 3.8,-6.9 2.3,-9.7 5.1,-8.2 6.0,-11.2 6.9,-8.2 9.7,-9.7 8.2,-6.9" fill="#f09a28"/><circle cx="6" cy="-6" r="2.0" fill="#ffd890"/></g><g transform="translate(714,102.5)"><path d="M-10 -1h9M2 -4v5q0 4-4 4h-4" fill="none" stroke="#4a4d52" stroke-width="1.400"/><polygon points="10.2,-5.0 7.2,-4.1 8.7,-1.3 5.9,-2.8 5.0,0.2 4.1,-2.8 1.3,-1.3 2.8,-4.1 -0.2,-5.0 2.8,-5.9 1.3,-8.7 4.1,-7.2 5.0,-10.2 5.9,-7.2 8.7,-8.7 7.2,-5.9" fill="#f09a28"/><circle cx="5" cy="-5" r="2.0" fill="#ffd890"/></g><g transform="translate(714,131.5)"><path d="M-8 8V2q6-8 16-3v9z" fill="#cfe6fa" stroke="#2f7fd0" stroke-width="1.300"/><path d="M-5 8v-6M-2 8v-8M1 8v-9M4 8v-9" stroke="#7ab0e0" stroke-width="1"/><path d="M-8 -3l3-5" stroke="#4a4d52" stroke-width="1.300" stroke-dasharray="2 1.500"/><polygon points="11.2,-6.0 8.2,-5.1 9.7,-2.3 6.9,-3.8 6.0,-0.8 5.1,-3.8 2.3,-2.3 3.8,-5.1 0.8,-6.0 3.8,-6.9 2.3,-9.7 5.1,-8.2 6.0,-11.2 6.9,-8.2 9.7,-9.7 8.2,-6.9" fill="#f09a28"/><circle cx="6" cy="-6" r="2.0" fill="#ffd890"/></g><g transform="translate(866,73.5)"><path d="M-8 7L8 -8" stroke="#4a4d52" stroke-width="1.400"/><rect x="-9.5" y="5.5" width="3" height="3" fill="#f4f4f4" stroke="#4a4d52" stroke-width="1"/><rect x="6.5" y="-9.5" width="3" height="3" fill="#f4f4f4" stroke="#4a4d52" stroke-width="1"/></g><g transform="translate(908,73.5)"><path d="M-8 8q0-14 16-16" fill="none" stroke="#4a4d52" stroke-width="1.400"/><rect x="-9.5" y="6.5" width="3" height="3" fill="#f4f4f4" stroke="#4a4d52" stroke-width="1"/><rect x="-4.5" y="-4.5" width="3" height="3" fill="#f4f4f4" stroke="#4a4d52" stroke-width="1"/><rect x="6.5" y="-9.5" width="3" height="3" fill="#f4f4f4" stroke="#4a4d52" stroke-width="1"/></g><g transform="translate(956,73.5)"><path d="M-8 6h10a5.500 5.500 0 0 0 0-11h-1" fill="none" stroke="#4a4d52" stroke-width="1.500"/><rect x="-9.5" y="4.5" width="3" height="3" fill="#f4f4f4" stroke="#4a4d52" stroke-width="1"/><rect x="-0.5" y="4.5" width="3" height="3" fill="#f4f4f4" stroke="#4a4d52" stroke-width="1"/><rect x="-0.5" y="-6.5" width="3" height="3" fill="#f4f4f4" stroke="#4a4d52" stroke-width="1"/></g><g transform="translate(866,102.5)"><path d="M-9 9L8 -9" stroke="#4a4d52" stroke-width="1.800"/><rect x="-4.5" y="-8.5" width="3" height="3" fill="#f4f4f4" stroke="#4a4d52" stroke-width="1"/><rect x="-8.5" y="-1.5" width="3" height="3" fill="#f4f4f4" stroke="#4a4d52" stroke-width="1"/><rect x="4.5" y="0.5" width="3" height="3" fill="#f4f4f4" stroke="#4a4d52" stroke-width="1"/><rect x="-2.5" y="5.5" width="3" height="3" fill="#f4f4f4" stroke="#4a4d52" stroke-width="1"/></g><g transform="translate(908,102.5)"><circle r="8.500" fill="#f2f2f2" stroke="#4a4d52" stroke-width="1.400"/><path d="M0 0l6-6" stroke="#4a4d52" stroke-width="1.200"/><rect x="-1.5" y="-1.5" width="3" height="3" fill="#f4f4f4" stroke="#4a4d52" stroke-width="1"/></g><g transform="translate(956,102.5)"><rect x="-7.500" y="-6" width="16" height="12" fill="#e4e6ea" stroke="#4a4d52" stroke-width="1.500"/><rect x="-9.0" y="4.5" width="3" height="3" fill="#f4f4f4" stroke="#4a4d52" stroke-width="1"/><rect x="7.0" y="-7.5" width="3" height="3" fill="#f4f4f4" stroke="#4a4d52" stroke-width="1"/></g><g transform="translate(866,131.5)"><path d="M-8 8q13-1 14-16" fill="none" stroke="#4a4d52" stroke-width="1.500"/><path d="M-8 8V-7H4" fill="none" stroke="#4a4d52" stroke-width="1.100" stroke-dasharray="2 1.500"/><path d="M3.500 -7h5M6 -9.500v5M-10 8h4" stroke="#4a4d52" stroke-width="1.200"/></g><g transform="translate(908,131.5)"><ellipse rx="9" ry="5.500" fill="#f2f2f2" stroke="#4a4d52" stroke-width="1.400"/><circle cx="0" cy="0" r="1.500" fill="#4a4d52"/><path d="M0 0h9" stroke="#4a4d52" stroke-width="1"/></g><g transform="translate(956,131.5)"><rect x="-6" y="-6" width="12" height="12" fill="#c8c8c8"/><path d="M-6 2l8-8M-6 6l12-12M-2 6l8-8M2 6l4-4M-6 -2l4-4" stroke="#777" stroke-width="1"/><path d="M-9 -6h18M-9 6h18M-6 -9v18M6 -9v18" stroke="#4a4d52" stroke-width="1.400"/></g><g transform="translate(991,73.5)"><path d="M0 -9v18M-9 0h18" stroke="#4a4d52" stroke-width="1.300"/><path d="M0 -10l3 3.500h-6zM0 10l3-3.500h-6zM-10 0l3.500-3v6zM10 0l-3.500-3v6z" fill="#4a4d52"/><rect x="-2.500" y="-2.500" width="5" height="5" fill="#fff" stroke="#4a4d52" stroke-width="1.100"/></g><g transform="translate(991,102.5)"><circle cx="-5" cy="-5" r="3.500" fill="#e8e8e8" stroke="#8a8d92" stroke-width="1.300"/><circle cx="2" cy="3" r="4" fill="#bcdcf2" stroke="#2f7fd0" stroke-width="1.300"/><circle cx="5" cy="5" r="3.500" fill="#bcdcf2" stroke="#2f7fd0" stroke-width="1.300"/><path d="M1 -7q6 0 5 4M6 -3l-2-1M6 -3l1.500-2" fill="none" stroke="#222" stroke-width="1.300"/></g><g transform="translate(991,131.5)"><path d="M-2 -8h5l4 16h-9z" fill="#bcdcf2" stroke="#5a9ad0" stroke-width="1.200"/><path d="M-2 -8h-7v16h7" fill="none" stroke="#4a4d52" stroke-width="1.400"/><path d="M-5 4h7M2 4l-2.500-2M2 4l-2.500 2" stroke="#111" stroke-width="1.300" fill="none"/></g><g transform="translate(1077,74.5)"><path d="M-3 -6.500a7.500 7.500 0 1 0 6 0" fill="none" stroke="#4a4d52" stroke-width="1.600"/><path d="M-1 -9.500v6l-5-2.500z" fill="#4a4d52"/></g><g transform="translate(1077,102.5)"><path d="M-2.500 -6v13h-6z" fill="#f4f4f4" stroke="#4a4d52" stroke-width="1.200"/><path d="M2.500 -6v13h6z" fill="#bcdcf2" stroke="#2f7fd0" stroke-width="1.200"/><path d="M0 -9.500v19" stroke="#111" stroke-width="1.200"/></g><g transform="translate(1077,131.5)"><rect x="-8" y="-8" width="17" height="16.500" rx="1" fill="#bcdcf2" stroke="#2f7fd0" stroke-width="1.400"/><rect x="-8" y="1" width="8" height="7.500" fill="#eef4fa" stroke="#4a4d52" stroke-width="1.300"/></g><g transform="translate(1161,73.5)"><path d="M-3 7L3 -7" stroke="#2f7fd0" stroke-width="1.600"/><path d="M-10 0h6" stroke="#4a4d52" stroke-width="1.300"/><path d="M2 0h8" stroke="#4a4d52" stroke-width="1.300" stroke-dasharray="1.500 1.500"/></g><g transform="translate(1161,102.5)"><path d="M-8 8v-6q1-9 10-10h6v16z" fill="#eceef2" stroke="#4a4d52" stroke-width="1.300"/><path d="M-8 2q1-9 10-10" fill="none" stroke="#2f7fd0" stroke-width="1.500"/></g><g transform="translate(1161,131.5)"><rect x="-9" y="-9" width="7" height="7" fill="#bcdcf2" stroke="#2f7fd0" stroke-width="1.300"/><rect x="-9" y="1" width="7" height="7" fill="#bcdcf2" stroke="#2f7fd0" stroke-width="1.300"/><rect x="1" y="-9" width="7" height="7" fill="#bcdcf2" stroke="#2f7fd0" stroke-width="1.300"/><rect x="1" y="1" width="7" height="7" fill="#bcdcf2" stroke="#2f7fd0" stroke-width="1.300"/></g><g transform="translate(1251,73.5)"><path d="M-6 5L6 -8" stroke="#c8a070" stroke-width="3"/><path d="M-8 8l5-6 3 3-6 4z" fill="#9a4a2a" stroke="#5a2a1a" stroke-width=".700"/><path d="M-9 9.500h16" stroke="#777" stroke-width="1.200"/></g><g transform="translate(1251,102.5)"><path d="M-8 0l3-4h9v8l-3 4h-9z" fill="#bcdcf2" stroke="#2f7fd0" stroke-width="1.300"/><path d="M-8 0h9v8M1 0l3-4" fill="none" stroke="#2f7fd0" stroke-width="1.200"/><path d="M3 -6l3-3h4v7l-2 3" fill="none" stroke="#2f7fd0" stroke-width="1.300"/></g><g transform="translate(1251,131.5)"><path d="M-8 8v-4h4v-5q0-6 5-6t5 6v5h-3v4z" fill="#eef4fa" stroke="#2a5fa0" stroke-width="1.500"/><path d="M-8 8h16" stroke="#2f7fd0" stroke-width="2"/></g><g transform="translate(1291,73.5)"><path d="M-8 -6h9M-8 -2h9M-8 2h6M-3 -9l2 0" stroke="#4a4d52" stroke-width="1.300"/><path d="M-2 -8l4-1.500" stroke="#2f7fd0" stroke-width="1.200"/><rect x="0" y="-1" width="8" height="10" rx="1" fill="#eef4fa" stroke="#4a4d52" stroke-width="1.200"/><rect x="2" y="1" width="4" height="2.500" fill="#9cc4ea"/><path d="M2 6h4" stroke="#2f7fd0" stroke-width="1.200"/></g><g transform="translate(1324,73.5)"><path d="M-7 4l5-3h10l-5 3z" fill="#9cc4ea" stroke="#2a5fa0" stroke-width="1.100"/><path d="M-7 0l5-3h10l-5 3z" fill="#9cc4ea" stroke="#2a5fa0" stroke-width="1.100"/><path d="M-7 -4l5-3h10l-5 3z" fill="#9cc4ea" stroke="#2a5fa0" stroke-width="1.100"/><circle cx="1" cy="-7" r="3" fill="#e8e8e8" stroke="#888" stroke-width="1"/></g><g transform="translate(1357,73.5)"><path d="M-7 4l5-3h10l-5 3z" fill="#f4f4f4" stroke="#4a4d52" stroke-width="1.100"/><path d="M-7 0l5-3h10l-5 3z" fill="#f4f4f4" stroke="#4a4d52" stroke-width="1.100"/><path d="M-7 -4l5-3h10l-5 3z" fill="#f4f4f4" stroke="#4a4d52" stroke-width="1.100"/><path d="M-2 5l7-2 4-5 1 3-3 6-7 2z" fill="#c8781a"/></g><g transform="translate(1386,73.5)"><path d="M-7 4l5-3h10l-5 3z" fill="#f4f4f4" stroke="#4a4d52" stroke-width="1.100"/><path d="M-7 0l5-3h10l-5 3z" fill="#f4f4f4" stroke="#4a4d52" stroke-width="1.100"/><path d="M-7 -4l5-3h10l-5 3z" fill="#f4f4f4" stroke="#4a4d52" stroke-width="1.100"/><path d="M-8 -5q0-4 4-4M-8 -5l-1.500-2M-8 -5l2-1.500" fill="none" stroke="#111" stroke-width="1.300"/></g><g transform="translate(1419,73.5)"><path d="M-7 4l5-3h10l-5 3z" fill="#9cc4ea" stroke="#2a5fa0" stroke-width="1.100"/><path d="M-7 0l5-3h10l-5 3z" fill="#9cc4ea" stroke="#2a5fa0" stroke-width="1.100"/><path d="M-7 -4l5-3h10l-5 3z" fill="#9cc4ea" stroke="#2a5fa0" stroke-width="1.100"/><path d="M8 3l-5 5M3 8v-3.500M3 8h3.500" stroke="#111" stroke-width="1.400" fill="none"/></g><g transform="translate(1448,73.5)"><path d="M-7 4l5-3h10l-5 3z" fill="#9cc4ea" stroke="#2a5fa0" stroke-width="1.100"/><path d="M-7 0l5-3h10l-5 3z" fill="#9cc4ea" stroke="#2a5fa0" stroke-width="1.100"/><path d="M-7 -4l5-3h10l-5 3z" fill="#9cc4ea" stroke="#2a5fa0" stroke-width="1.100"/><path d="M3 8l5-5M8 3v3.500M8 3h-3.500" stroke="#111" stroke-width="1.400" fill="none"/></g><g transform="translate(1481,73.5)"><path d="M-8 0l5-5h10l-5 5z" fill="#f4f4f4" stroke="#4a4d52" stroke-width="1.100"/><circle cx="4" cy="4" r="3" fill="#f4f4f4" stroke="#2f7fd0" stroke-width="1.300"/><circle cx="4" cy="4" r="5" fill="none" stroke="#2f7fd0" stroke-width="1.500" stroke-dasharray="2 1.900"/></g><g transform="translate(1510,73.5)"><path d="M-8 0l5-5h10l-5 5z" fill="#f4f4f4" stroke="#4a4d52" stroke-width="1.100"/><path d="M2 1a3 3 0 0 1 6 0c0 2-1.500 2.500-1.500 4.500h-3c0-2-1.500-2.500-1.500-4.500z" fill="#f4f8fc" stroke="#2f7fd0" stroke-width="1"/><path d="M4 8h2.500" stroke="#2f7fd0" stroke-width="1.200"/></g><g transform="translate(1290,131)"><path d="M-5 -3a5 5 0 0 1 10 0c0 3.500-2.500 4-2.500 7h-5c0-3-2.500-3.500-2.500-7z" fill="#fff4b8" stroke="#a08a30" stroke-width="1"/><path d="M-2 5.500h4v3h-4z" fill="#e0e0e0" stroke="#666" stroke-width=".800"/></g><g transform="translate(1313,131)"><circle r="4" fill="#fff2a0" stroke="#8a7a20" stroke-width="1"/><path d="M0 -8.500v2.500M0 6v2.500M-8.500 0h2.500M6 0h2.500M-6 -6l1.800 1.800M6 -6l-1.800 1.800M-6 6l1.800-1.800M6 6l-1.800-1.800" stroke="#555" stroke-width="1.100"/></g><g transform="translate(1334,132)"><rect x="-7" y="-1" width="11" height="8" rx="1" fill="#9cc8f0" stroke="#2a5fa0" stroke-width="1.300"/><path d="M-1.500 1.500v3" stroke="#1d3f6a" stroke-width="1.400"/><path d="M1 -1v-4a3.500 3.500 0 0 1 7 0v2" fill="none" stroke="#2a5fa0" stroke-width="1.500"/></g><g transform="translate(1562,80)"><rect x="-14" y="-14" width="22" height="30" rx="2" fill="#b4b2a8" stroke="#7a786e" stroke-width="1.200"/><path d="M-8 -14v-2h3q2-3.500 4 0h3v2z" fill="#d8d8d4" stroke="#7a786e" stroke-width="1"/><path d="M-5 -6h14l6 6v18h-20z" fill="#fafafa" stroke="#8a8a8a" stroke-width="1.100"/><path d="M9 -6v6h6" fill="#e0e0e0" stroke="#8a8a8a" stroke-width="1"/></g><g transform="translate(1607,73.5)"><path d="M-7 -8L5 6M7 -8L-5 6" stroke="#3a3d42" stroke-width="1.700"/><circle cx="-5.500" cy="6.500" r="2.300" fill="#f4f4f4" stroke="#3a3d42" stroke-width="1.300"/><circle cx="5.500" cy="6.500" r="2.300" fill="#f4f4f4" stroke="#3a3d42" stroke-width="1.300"/></g><g transform="translate(1607,102.5)"><path d="M-8 -8h8v13h-8z" fill="#f0f0f0" stroke="#4a4d52" stroke-width="1.300"/><path d="M-3 -5h7l4 4v10h-11z" fill="#fafafa" stroke="#4a4d52" stroke-width="1.300"/><path d="M4 -5v4h4" fill="none" stroke="#4a4d52" stroke-width="1.100"/></g><g transform="translate(1607,131.5)"><rect x="-8" y="-9" width="13" height="17" fill="#f8f8f8" stroke="#4a4d52" stroke-width="1.300"/><rect x="-5.500" y="-6.500" width="5" height="5" fill="#2f5fb0"/><rect x="0" y="-6.500" width="3" height="5" fill="#b0b8c8"/><path d="M-3 6l6-2 4-4 1 3-3 5-6 2z" fill="#c8781a"/><path d="M5 1l3-3" stroke="#7aa0c8" stroke-width="2"/></g></svg>
<div style="left:2px;top:180px;width:393px;height:25px;background:#a9a9a9;border-radius:0 6px 0 0;"></div>
<span style="left:16.0px;top:186.1px;font-size:14px;line-height:14px;color:#222;letter-spacing:0.106px;">Область инструментов</span>
<svg style="left:0px;top:0px;" width="20" height="210" viewBox="0 0 20 210"><g fill="#2a2a2a"><rect x="4.5" y="184.0" width="1.3" height="1.3"/><rect x="4.5" y="186.6" width="1.3" height="1.3"/><rect x="4.5" y="189.2" width="1.3" height="1.3"/><rect x="4.5" y="191.8" width="1.3" height="1.3"/><rect x="4.5" y="194.4" width="1.3" height="1.3"/><rect x="4.5" y="197.0" width="1.3" height="1.3"/><rect x="7" y="184.0" width="1.3" height="1.3"/><rect x="7" y="186.6" width="1.3" height="1.3"/><rect x="7" y="189.2" width="1.3" height="1.3"/><rect x="7" y="191.8" width="1.3" height="1.3"/><rect x="7" y="194.4" width="1.3" height="1.3"/><rect x="7" y="197.0" width="1.3" height="1.3"/></g></svg>
<div style="left:2px;top:204px;width:393px;height:37px;background:#ececec;border-radius:0 5px 0 0;"></div>
<div style="left:2px;top:241px;width:393px;height:478px;background:#fff;border-top:1px solid #b5b5b5;"></div>
<div style="left:373px;top:242px;width:20px;height:476px;background:linear-gradient(90deg,#e6e6e6,#f6f6f6 40%,#f2f2f2);"></div>
<div style="left:374px;top:354px;width:18px;height:281px;background:linear-gradient(90deg,#f6f6f6,#e4e4e4 60%,#d4d4d4);border:1px solid #a2a2a2;border-radius:2px;"></div>
<svg style="left:378px;top:251px;" width="9" height="5" viewBox="0 0 9 5"><path d="M0 5h9l-4.5-5z" fill="#444"/></svg>
<svg style="left:378px;top:705px;" width="9" height="5" viewBox="0 0 9 5"><path d="M0 0h9l-4.5 5z" fill="#444"/></svg>
<div style="left:378px;top:491px;width:7px;height:1px;background:#555;"></div>
<div style="left:378px;top:494px;width:7px;height:1px;background:#555;"></div>
<div style="left:378px;top:497px;width:7px;height:1px;background:#555;"></div>
<div style="left:395px;top:787px;width:23px;height:56px;background:#6b6b6b;"></div>
<div style="left:395px;top:208px;width:23px;height:433px;background:linear-gradient(90deg,#c2c2c2,#d2d2d2 30%,#cecece);border-right:1px solid #9a9a9a;border-radius:0 4px 0 0;"></div>
<div style="left:395px;top:351px;width:22px;height:1px;background:#8e8e8e;"></div>
<div style="left:395px;top:496px;width:22px;height:1px;background:#8e8e8e;"></div>
<div style="left:395px;top:640px;width:23px;height:147px;background:#f0f0f0;border-right:1px solid #b0b0b0;border-radius:0 0 3px 0;"></div>
<span style="left:371.0px;top:271px;width:70px;font-size:13.5px;line-height:14px;color:#1e1e1e;letter-spacing:0.472px;transform:rotate(-90deg);transform-origin:50% 50%;">Prospector</span>
<span style="left:381.5px;top:417.5px;width:49px;font-size:13.5px;line-height:14px;color:#1e1e1e;letter-spacing:0.028px;transform:rotate(-90deg);transform-origin:50% 50%;">Settings</span>
<span style="left:384.5px;top:560.5px;width:43px;font-size:13.5px;line-height:14px;color:#1e1e1e;letter-spacing:0.164px;transform:rotate(-90deg);transform-origin:50% 50%;">Survey</span>
<span style="left:381.5px;top:705.5px;width:49px;font-size:13.5px;line-height:14px;color:#1e1e1e;letter-spacing:0.353px;transform:rotate(-90deg);transform-origin:50% 50%;">Toolbox</span>
<div style="left:2px;top:718px;width:393px;height:124px;background:#f0f0f0;border-top:1px solid #8a8a8a;"></div>
<span style="left:60.0px;top:248.1px;font-size:14px;line-height:14px;color:#1e1e1e;letter-spacing:0.252px;">Менеджер расширений для подписчиков</span>
<span style="left:60.0px;top:272.1px;font-size:14px;line-height:14px;color:#1e1e1e;letter-spacing:0.014px;">Benelux Tools en Rapporten</span>
<span style="left:60.0px;top:296.1px;font-size:14px;line-height:14px;color:#1e1e1e;letter-spacing:-0.820px;">RELATÓRIOS</span>
<span style="left:60.0px;top:320.1px;font-size:14px;line-height:14px;color:#1e1e1e;letter-spacing:-0.043px;">Berichte CH</span>
<span style="left:60.0px;top:344.1px;font-size:14px;line-height:14px;color:#1e1e1e;letter-spacing:-0.142px;">Verschiedenes</span>
<span style="left:60.0px;top:368.1px;font-size:14px;line-height:14px;color:#1e1e1e;letter-spacing:-0.417px;">Berichte_DE</span>
<span style="left:60.0px;top:392.1px;font-size:14px;line-height:14px;color:#1e1e1e;letter-spacing:-0.012px;">DK rapporter</span>
<span style="left:60.0px;top:416.1px;font-size:14px;line-height:14px;color:#1e1e1e;letter-spacing:0.233px;">Administrador de Informes</span>
<span style="left:60.0px;top:440.1px;font-size:14px;line-height:14px;color:#1e1e1e;letter-spacing:-0.097px;">India Reports</span>
<span style="left:60.0px;top:464.1px;font-size:14px;line-height:14px;color:#1e1e1e;letter-spacing:0.030px;">Reportes Country Kit Mexico</span>
<span style="left:60.0px;top:488.1px;font-size:14px;line-height:14px;color:#1e1e1e;letter-spacing:0.081px;">Norwegian Reports Manager</span>
<span style="left:60.0px;top:512.1px;font-size:14px;line-height:14px;color:#1e1e1e;letter-spacing:0.250px;">Norwegian Tools</span>
<span style="left:60.0px;top:536.1px;font-size:14px;line-height:14px;color:#1e1e1e;letter-spacing:0.049px;">Romanian Report Manager</span>
<span style="left:60.0px;top:560.1px;font-size:14px;line-height:14px;color:#1e1e1e;letter-spacing:0.244px;">Инструменты ЖД</span>
<span style="left:83.0px;top:584.1px;font-size:14px;line-height:14px;color:#1e1e1e;letter-spacing:0.222px;">Объемы</span>
<span style="left:105.0px;top:608.1px;font-size:14px;line-height:14px;color:#1e1e1e;letter-spacing:0.138px;">Таблица объемов землняных работ</span>
<span style="left:83.0px;top:632.1px;font-size:14px;line-height:14px;color:#1e1e1e;letter-spacing:0.223px;">Профиль</span>
<div style="left:101px;top:651px;width:271px;height:23px;background:#a6a6a6;"></div>
<span style="left:105.0px;top:656.1px;font-size:14px;line-height:14px;color:#1e1e1e;letter-spacing:0.001px;">Элементы плана на вид профиля</span>
<span style="left:60.0px;top:680.1px;font-size:14px;line-height:14px;color:#1e1e1e;letter-spacing:0.052px;">Republic of South Africa Reports</span>
<span style="left:60.0px;top:704.1px;font-size:14px;line-height:14px;color:#1e1e1e;letter-spacing:0.065px;">Ведомости</span>
<svg style="left:0px;top:0px;" width="1638" height="872" viewBox="0 0 1638 872"><path d="M18.500 242V719" stroke="#9a9a9a" stroke-width="1" stroke-dasharray="1 1" fill="none"/><path d="M41.500 577V639" stroke="#9a9a9a" stroke-width="1" stroke-dasharray="1 1" fill="none"/><path d="M64.500 600V615.500H75" stroke="#9a9a9a" stroke-width="1" stroke-dasharray="1 1" fill="none"/><path d="M64.500 648V663.500H75" stroke="#9a9a9a" stroke-width="1" stroke-dasharray="1 1" fill="none"/><path d="M23.5 255.5H29.5" stroke="#9a9a9a" stroke-width="1" stroke-dasharray="1 1" fill="none"/><rect x="14.0" y="251.0" width="9" height="9" fill="#fcfcfc" stroke="#8c8c8c" stroke-width="1"/><path d="M16.0 255.5h5" stroke="#333" stroke-width="1"/><path d="M18.5 253.0v5" stroke="#333" stroke-width="1"/><rect x="33.5" y="246.5" width="15" height="17.5" fill="#fbfbfb" stroke="#5c5c5c" stroke-width="1.5"/><path d="M36 250h3M40 250h5" stroke="#3a3a3a" stroke-width="1.4"/><path d="M36 253h2M39 253h6M36 256h2M39 256h5M36 259h2M39 259h6" stroke="#8c8c8c" stroke-width="1.1"/><path d="M23.5 279.5H29.5" stroke="#9a9a9a" stroke-width="1" stroke-dasharray="1 1" fill="none"/><rect x="14.0" y="275.0" width="9" height="9" fill="#fcfcfc" stroke="#8c8c8c" stroke-width="1"/><path d="M16.0 279.5h5" stroke="#333" stroke-width="1"/><path d="M18.5 277.0v5" stroke="#333" stroke-width="1"/><rect x="32" y="269.5" width="9" height="6.300" fill="#e8112d"/><rect x="32" y="275.8" width="9" height="6.300" fill="#fff"/><rect x="32" y="282.1" width="9" height="6.400" fill="#1a3fd0"/><rect x="41" y="269.5" width="3.600" height="19" fill="#111"/><rect x="44.600" y="269.5" width="3.400" height="19" fill="#ffd800"/><rect x="48" y="269.5" width="3.400" height="19" fill="#e8112d"/><path d="M23.5 303.5H29.5" stroke="#9a9a9a" stroke-width="1" stroke-dasharray="1 1" fill="none"/><rect x="14.0" y="299.0" width="9" height="9" fill="#fcfcfc" stroke="#8c8c8c" stroke-width="1"/><path d="M16.0 303.5h5" stroke="#333" stroke-width="1"/><path d="M18.5 301.0v5" stroke="#333" stroke-width="1"/><rect x="32" y="296.5" width="19.400" height="13" fill="#1f9a2c"/><path d="M41.700 298.0l8 5-8 5-8-5z" fill="#ffd800"/><circle cx="41.700" cy="303.0" r="3.200" fill="#1a2a7a"/><path d="M23.5 327.5H29.5" stroke="#9a9a9a" stroke-width="1" stroke-dasharray="1 1" fill="none"/><rect x="14.0" y="323.0" width="9" height="9" fill="#fcfcfc" stroke="#8c8c8c" stroke-width="1"/><path d="M16.0 327.5h5" stroke="#333" stroke-width="1"/><path d="M18.5 325.0v5" stroke="#333" stroke-width="1"/><rect x="32" y="320.5" width="19.400" height="13.500" rx="1" fill="#d8232a"/><path d="M41.700 323.5v7.500M38 327.25h7.500" stroke="#fff" stroke-width="2.600"/><path d="M23.5 351.5H29.5" stroke="#9a9a9a" stroke-width="1" stroke-dasharray="1 1" fill="none"/><g transform="translate(33,343) scale(1.0)"><path d="M5.500 3.500v-2h6v2" fill="none" stroke="#8a3030" stroke-width="1.400"/><rect x=".700" y="3.500" width="15.600" height="9.500" rx="1.500" fill="#e8a0a0" stroke="#a03838" stroke-width="1.300"/><path d="M.700 7.500h15.600" stroke="#a03838" stroke-width="1.200"/><path d="M3 5.200h11" stroke="#f6d0d0" stroke-width="1"/><rect x="4" y="6.500" width="2" height="2.400" fill="#f4e0e0" stroke="#803030" stroke-width=".600"/><rect x="11" y="6.500" width="2" height="2.400" fill="#f4e0e0" stroke="#803030" stroke-width=".600"/></g><path d="M23.5 375.5H29.5" stroke="#9a9a9a" stroke-width="1" stroke-dasharray="1 1" fill="none"/><rect x="14.0" y="371.0" width="9" height="9" fill="#fcfcfc" stroke="#8c8c8c" stroke-width="1"/><path d="M16.0 375.5h5" stroke="#333" stroke-width="1"/><path d="M18.5 373.0v5" stroke="#333" stroke-width="1"/><rect x="32" y="366" width="19.400" height="6" fill="#111"/><rect x="32" y="372" width="19.400" height="6" fill="#dd1c1c"/><rect x="32" y="378" width="19.400" height="6" fill="#ffb400"/><path d="M23.5 399.5H29.5" stroke="#9a9a9a" stroke-width="1" stroke-dasharray="1 1" fill="none"/><rect x="14.0" y="395.0" width="9" height="9" fill="#fcfcfc" stroke="#8c8c8c" stroke-width="1"/><path d="M16.0 399.5h5" stroke="#333" stroke-width="1"/><path d="M18.5 397.0v5" stroke="#333" stroke-width="1"/><rect x="33.5" y="390.5" width="15" height="17.5" fill="#fbfbfb" stroke="#5c5c5c" stroke-width="1.5"/><path d="M36 394h3M40 394h5" stroke="#3a3a3a" stroke-width="1.4"/><path d="M36 397h2M39 397h6M36 400h2M39 400h5M36 403h2M39 403h6" stroke="#8c8c8c" stroke-width="1.1"/><path d="M23.5 423.5H29.5" stroke="#9a9a9a" stroke-width="1" stroke-dasharray="1 1" fill="none"/><rect x="14.0" y="419.0" width="9" height="9" fill="#fcfcfc" stroke="#8c8c8c" stroke-width="1"/><path d="M16.0 423.5h5" stroke="#333" stroke-width="1"/><path d="M18.5 421.0v5" stroke="#333" stroke-width="1"/><rect x="33.5" y="414.5" width="15" height="17.5" fill="#fbfbfb" stroke="#5c5c5c" stroke-width="1.5"/><path d="M36 418h3M40 418h5" stroke="#3a3a3a" stroke-width="1.4"/><path d="M36 421h2M39 421h6M36 424h2M39 424h5M36 427h2M39 427h6" stroke="#8c8c8c" stroke-width="1.1"/><path d="M23.5 447.5H29.5" stroke="#9a9a9a" stroke-width="1" stroke-dasharray="1 1" fill="none"/><rect x="14.0" y="443.0" width="9" height="9" fill="#fcfcfc" stroke="#8c8c8c" stroke-width="1"/><path d="M16.0 447.5h5" stroke="#333" stroke-width="1"/><path d="M18.5 445.0v5" stroke="#333" stroke-width="1"/><rect x="32.5" y="437.5" width="15" height="17.5" fill="#fbfbfb" stroke="#5c5c5c" stroke-width="1.5"/><path d="M35 441h3M39 441h5" stroke="#3a3a3a" stroke-width="1.4"/><path d="M35 444h2M38 444h6M35 447h2M38 447h5M35 450h2M38 450h6" stroke="#8c8c8c" stroke-width="1.1"/><rect x="36.5" y="440.5" width="15" height="17.5" fill="#fbfbfb" stroke="#5c5c5c" stroke-width="1.5"/><path d="M39 444h3M43 444h5" stroke="#3a3a3a" stroke-width="1.4"/><path d="M39 447h2M42 447h6M39 450h2M42 450h5M39 453h2M42 453h6" stroke="#8c8c8c" stroke-width="1.1"/><path d="M23.5 471.5H29.5" stroke="#9a9a9a" stroke-width="1" stroke-dasharray="1 1" fill="none"/><rect x="14.0" y="467.0" width="9" height="9" fill="#fcfcfc" stroke="#8c8c8c" stroke-width="1"/><path d="M16.0 471.5h5" stroke="#333" stroke-width="1"/><path d="M18.5 469.0v5" stroke="#333" stroke-width="1"/><path d="M32 464l8-2 6 3 5 1v5h-19z" fill="#e04040"/><path d="M32 471l9-6M32 466l6 4M38 463l4 5" stroke="#fff" stroke-width="1.400"/><rect x="38" y="471" width="13" height="8.500" fill="#7cc060" stroke="#4a9a3a" stroke-width="1"/><path d="M40 477l2-4 2 4M45 473l4 4M49 473l-4 4" stroke="#e8f6e0" stroke-width="1" fill="none"/><path d="M23.5 495.5H29.5" stroke="#9a9a9a" stroke-width="1" stroke-dasharray="1 1" fill="none"/><rect x="14.0" y="491.0" width="9" height="9" fill="#fcfcfc" stroke="#8c8c8c" stroke-width="1"/><path d="M16.0 495.5h5" stroke="#333" stroke-width="1"/><path d="M18.5 493.0v5" stroke="#333" stroke-width="1"/><rect x="32.5" y="486.5" width="7" height="3" fill="#111"/><rect x="32.5" y="488.5" width="19" height="15" fill="#c8102e" stroke="#701018" stroke-width=".800"/><path d="M32.5 496.0h19M39.0 488.5v15" stroke="#fff" stroke-width="4"/><path d="M32.5 496.0h19M39.0 488.5v15" stroke="#1a2f7a" stroke-width="2"/><path d="M32.5 491.5h19M32.5 500.5h19" stroke="#7a1018" stroke-width=".800"/><path d="M23.5 519.5H29.5" stroke="#9a9a9a" stroke-width="1" stroke-dasharray="1 1" fill="none"/><rect x="14.0" y="515.0" width="9" height="9" fill="#fcfcfc" stroke="#8c8c8c" stroke-width="1"/><path d="M16.0 519.5h5" stroke="#333" stroke-width="1"/><path d="M18.5 517.0v5" stroke="#333" stroke-width="1"/><rect x="32.5" y="510.5" width="7" height="3" fill="#111"/><rect x="32.5" y="512.5" width="19" height="15" fill="#c8102e" stroke="#701018" stroke-width=".800"/><path d="M32.5 520.0h19M39.0 512.5v15" stroke="#fff" stroke-width="4"/><path d="M32.5 520.0h19M39.0 512.5v15" stroke="#1a2f7a" stroke-width="2"/><path d="M32.5 515.5h19M32.5 524.5h19" stroke="#7a1018" stroke-width=".800"/><path d="M23.5 543.5H29.5" stroke="#9a9a9a" stroke-width="1" stroke-dasharray="1 1" fill="none"/><rect x="14.0" y="539.0" width="9" height="9" fill="#fcfcfc" stroke="#8c8c8c" stroke-width="1"/><path d="M16.0 543.5h5" stroke="#333" stroke-width="1"/><path d="M18.5 541.0v5" stroke="#333" stroke-width="1"/><rect x="33.5" y="534.5" width="15" height="17.5" fill="#fbfbfb" stroke="#5c5c5c" stroke-width="1.5"/><path d="M36 538h3M40 538h5" stroke="#3a3a3a" stroke-width="1.4"/><path d="M36 541h2M39 541h6M36 544h2M39 544h5M36 547h2M39 547h6" stroke="#8c8c8c" stroke-width="1.1"/><path d="M23.5 567.5H29.5" stroke="#9a9a9a" stroke-width="1" stroke-dasharray="1 1" fill="none"/><rect x="14.0" y="563.0" width="9" height="9" fill="#fcfcfc" stroke="#8c8c8c" stroke-width="1"/><path d="M16.0 567.5h5" stroke="#333" stroke-width="1"/><rect x="33.5" y="558.5" width="15" height="17.5" fill="#fbfbfb" stroke="#5c5c5c" stroke-width="1.5"/><path d="M36 562h3M40 562h5" stroke="#3a3a3a" stroke-width="1.4"/><path d="M36 565h2M39 565h6M36 568h2M39 568h5M36 571h2M39 571h6" stroke="#8c8c8c" stroke-width="1.1"/><path d="M46.5 591.5H52.5" stroke="#9a9a9a" stroke-width="1" stroke-dasharray="1 1" fill="none"/><rect x="37.0" y="587.0" width="9" height="9" fill="#fcfcfc" stroke="#8c8c8c" stroke-width="1"/><path d="M39.0 591.5h5" stroke="#333" stroke-width="1"/><rect x="56.5" y="582.5" width="15" height="17.5" fill="#fbfbfb" stroke="#5c5c5c" stroke-width="1.5"/><path d="M59 586h3M63 586h5" stroke="#3a3a3a" stroke-width="1.4"/><path d="M59 589h2M62 589h6M59 592h2M62 592h5M59 595h2M62 595h6" stroke="#8c8c8c" stroke-width="1.1"/><rect x="79.5" y="606.5" width="15" height="17.5" fill="#fbfbfb" stroke="#5c5c5c" stroke-width="1.5"/><path d="M82 610h3M86 610h5" stroke="#3a3a3a" stroke-width="1.4"/><path d="M82 613h2M85 613h6M82 616h2M85 616h5M82 619h2M85 619h6" stroke="#8c8c8c" stroke-width="1.1"/><path d="M46.5 639.5H52.5" stroke="#9a9a9a" stroke-width="1" stroke-dasharray="1 1" fill="none"/><rect x="37.0" y="635.0" width="9" height="9" fill="#fcfcfc" stroke="#8c8c8c" stroke-width="1"/><path d="M39.0 639.5h5" stroke="#333" stroke-width="1"/><rect x="56.5" y="630.5" width="15" height="17.5" fill="#fbfbfb" stroke="#5c5c5c" stroke-width="1.5"/><path d="M59 634h3M63 634h5" stroke="#3a3a3a" stroke-width="1.4"/><path d="M59 637h2M62 637h6M59 640h2M62 640h5M59 643h2M62 643h6" stroke="#8c8c8c" stroke-width="1.1"/><rect x="79.5" y="654.5" width="15" height="17.5" fill="#fbfbfb" stroke="#5c5c5c" stroke-width="1.5"/><path d="M82 658h3M86 658h5" stroke="#3a3a3a" stroke-width="1.4"/><path d="M82 661h2M85 661h6M82 664h2M85 664h5M82 667h2M85 667h6" stroke="#8c8c8c" stroke-width="1.1"/><path d="M23.5 687.5H29.5" stroke="#9a9a9a" stroke-width="1" stroke-dasharray="1 1" fill="none"/><rect x="14.0" y="683.0" width="9" height="9" fill="#fcfcfc" stroke="#8c8c8c" stroke-width="1"/><path d="M16.0 687.5h5" stroke="#333" stroke-width="1"/><path d="M18.5 685.0v5" stroke="#333" stroke-width="1"/><rect x="31" y="678" width="19" height="6.500" fill="#e03c31"/><rect x="31" y="689.5" width="19" height="6.500" fill="#1a2f9a"/><rect x="31" y="684" width="19" height="6" fill="#fff"/><path d="M31 678l10 9-10 9" fill="none" stroke="#fff" stroke-width="6"/><path d="M31 678l10 9-10 9M41 687h9" fill="none" stroke="#007a4d" stroke-width="3.600"/><path d="M31 681l6.500 6-6.500 6z" fill="#111" stroke="#ffb612" stroke-width="1.200"/><path d="M23.5 711.5H29.5" stroke="#9a9a9a" stroke-width="1" stroke-dasharray="1 1" fill="none"/><rect x="14.0" y="707.0" width="9" height="9" fill="#fcfcfc" stroke="#8c8c8c" stroke-width="1"/><path d="M16.0 711.5h5" stroke="#333" stroke-width="1"/><path d="M18.5 709.0v5" stroke="#333" stroke-width="1"/><rect x="33.5" y="702.5" width="15" height="17.5" fill="#fbfbfb" stroke="#5c5c5c" stroke-width="1.5"/><path d="M36 706h3M40 706h5" stroke="#3a3a3a" stroke-width="1.4"/><path d="M36 709h2M39 709h6M36 712h2M39 712h5M36 715h2M39 715h6" stroke="#8c8c8c" stroke-width="1.1"/><g transform="translate(7.5,215.3) scale(1.04)"><path d="M5.500 3.500v-2h6v2" fill="none" stroke="#8a3030" stroke-width="1.400"/><rect x=".700" y="3.500" width="15.600" height="9.500" rx="1.500" fill="#e8a0a0" stroke="#a03838" stroke-width="1.300"/><path d="M.700 7.500h15.600" stroke="#a03838" stroke-width="1.200"/><path d="M3 5.200h11" stroke="#f6d0d0" stroke-width="1"/><rect x="4" y="6.500" width="2" height="2.400" fill="#f4e0e0" stroke="#803030" stroke-width=".600"/><rect x="11" y="6.500" width="2" height="2.400" fill="#f4e0e0" stroke="#803030" stroke-width=".600"/></g><g transform="translate(39.5,212) scale(1.04)"><path d="M5.500 3.500v-2h6v2" fill="none" stroke="#8a3030" stroke-width="1.400"/><rect x=".700" y="3.500" width="15.600" height="9.500" rx="1.500" fill="#e8a0a0" stroke="#a03838" stroke-width="1.300"/><path d="M.700 7.500h15.600" stroke="#a03838" stroke-width="1.200"/><path d="M3 5.200h11" stroke="#f6d0d0" stroke-width="1"/><rect x="4" y="6.500" width="2" height="2.400" fill="#f4e0e0" stroke="#803030" stroke-width=".600"/><rect x="11" y="6.500" width="2" height="2.400" fill="#f4e0e0" stroke="#803030" stroke-width=".600"/></g><path d="M47 231l1-4 8-8 3 3-8 8z" fill="#f0c040" stroke="#7a5a10" stroke-width=".900"/><path d="M47 231l1-4 3 3z" fill="#333"/><g fill="#f2f2f2" stroke="#a8a8a8" stroke-width="1"><rect x="304.500" y="213.500" width="6" height="10" rx="1"/><rect x="311.500" y="224.500" width="11" height="7"/><path d="M317 224.500v7M311.500 228h11M306 216.500h3M306 220h3" fill="none"/><path d="M313 218.500h4v4M315 220.500l2 2 2-2" fill="none"/></g><rect x="336.500" y="214.500" width="18" height="15" rx="1" fill="#f4f4f4" stroke="#5a5a5a" stroke-width="1.600"/><rect x="337" y="215" width="5" height="14" fill="#6a6a6a"/><rect x="352" y="221" width="2.500" height="7" fill="#6a6a6a"/><path d="M342 219h10M342 222.500h10M342 226h10M345.500 216v13M349 216v13" stroke="#a0a0a0" stroke-width=".900"/><rect x="368.500" y="213" width="18.500" height="18.500" fill="#f0f0f0" stroke="#555" stroke-width="1.600"/><path d="M369.500 230.500v-16.500h16.500" stroke="#fff" stroke-width="1" fill="none"/></svg>
<span style="left:373.8px;top:216.0px;font-size:14.5px;line-height:14.5px;color:#222;font-weight:bold;">?</span>
<div style="left:2px;top:718px;width:371px;height:6px;background:#f0f0f0;border-top:1px solid #8a8a8a;"></div>
<svg style="left:0px;top:0px;" width="1638" height="872" viewBox="0 0 1638 872"><rect x="10.500" y="734.500" width="28" height="33" rx="1" fill="#fbfbfb" stroke="#6a6a6a" stroke-width="1.400"/><path d="M14 740h6M22 740h12" stroke="#444" stroke-width="1.600"/><path d="M14 744h4M20 744h14M14 748h4M20 748h12M14 752h4M20 752h14M14 756h4M20 756h13M14 760h4M20 760h14M14 764h4M20 764h10" stroke="#a0a0a0" stroke-width="1.100"/></svg>
<span style="left:52.0px;top:736.6px;font-size:13.5px;line-height:13.5px;color:#1e1e1e;letter-spacing:0.271px;">Элементы плана на вид профиля</span>
<span style="left:52.0px;top:754.6px;font-size:13.5px;line-height:13.5px;color:#1e1e1e;letter-spacing:0.306px;">Добавление элементов плана трассы на вид</span>
<span style="left:52.0px;top:772.6px;font-size:13.5px;line-height:13.5px;color:#1e1e1e;letter-spacing:0.548px;">профиля</span>
<div style="left:425px;top:178px;width:1173px;height:668px;background:linear-gradient(#a6a6a6,#8a8a8a 3px,#858585);"></div>
<div style="left:427px;top:181px;width:1168px;height:644px;background:#212830;"></div>
<div style="left:1595px;top:180px;width:3px;height:666px;background:#fff;"></div>
<div style="left:427px;top:825px;width:1168px;height:20px;background:#f0f0f0;"></div>
<svg style="left:0px;top:0px;" width="1638" height="872" viewBox="0 0 1638 872"><g fill="none" stroke="#1e78dc" stroke-width="1.3"><path d="M427 627.5L614 503.3H1139L1595 805.5"/><path d="M679.3 503.3V529H1072.7V503.3"/></g><g fill="none" stroke="#b316b3" stroke-width="1.1"><circle cx="613.5" cy="503.5" r="18.5"/><circle cx="679.3" cy="503.5" r="18.5"/><circle cx="679.3" cy="529" r="18.5"/><circle cx="1072.7" cy="503.5" r="18.5"/><circle cx="1072.7" cy="529" r="18.5"/><circle cx="1138.6" cy="503.5" r="18.5"/></g><g fill="none" stroke="#b316b3" stroke-width="1.1"><circle cx="730.5" cy="503.5" r="18.5"/><circle cx="738.5" cy="503.5" r="18.5"/><circle cx="748.5" cy="503.5" r="18.5"/><circle cx="756.5" cy="503.5" r="18.5"/><circle cx="764.5" cy="503.5" r="18.5"/><circle cx="773.5" cy="503.5" r="18.5"/><circle cx="781.5" cy="503.5" r="18.5"/><circle cx="789.0" cy="503.5" r="18.5"/><circle cx="742.5" cy="499" r="18.5"/><circle cx="776.5" cy="499" r="18.5"/><circle cx="752.5" cy="499" r="18.5"/><circle cx="767.5" cy="499" r="18.5"/><circle cx="754.5" cy="473.5" r="18.5"/><circle cx="759.5" cy="473.5" r="18.5"/><circle cx="765.0" cy="473.5" r="18.5"/><circle cx="757.5" cy="476.5" r="18.5"/><circle cx="762.5" cy="476.5" r="18.5"/><circle cx="755.5" cy="479.5" r="18.5"/><circle cx="764.5" cy="479.5" r="18.5"/><circle cx="759.5" cy="481.5" r="18.5"/></g><rect x="755.0" y="473.5" width="10" height="4.5" fill="#fff" stroke="#2a6cff" stroke-width="1"/><path d="M759.5 478V500" stroke="#2a55ff" stroke-width="2.6"/><path d="M759.5 478V500" stroke="#fff" stroke-width="1.6" stroke-dasharray="3 1.5"/><path d="M731.5 501.2H787.5" stroke="#2a6cff" stroke-width="2.4"/><path d="M737.5 500.8H781.5" stroke="#fff" stroke-width="1.5" stroke-dasharray="2.5 1"/><path d="M753.5 497.5H765.5" stroke="#7aa0ff" stroke-width="1" stroke-dasharray="2 1.5"/><g fill="none" stroke="#b316b3" stroke-width="1.1"><circle cx="962" cy="503.5" r="18.5"/><circle cx="970" cy="503.5" r="18.5"/><circle cx="980" cy="503.5" r="18.5"/><circle cx="988" cy="503.5" r="18.5"/><circle cx="996" cy="503.5" r="18.5"/><circle cx="1005" cy="503.5" r="18.5"/><circle cx="1013" cy="503.5" r="18.5"/><circle cx="1020.5" cy="503.5" r="18.5"/><circle cx="974" cy="499" r="18.5"/><circle cx="1008" cy="499" r="18.5"/><circle cx="984" cy="499" r="18.5"/><circle cx="999" cy="499" r="18.5"/><circle cx="986" cy="473.5" r="18.5"/><circle cx="991" cy="473.5" r="18.5"/><circle cx="996.5" cy="473.5" r="18.5"/><circle cx="989" cy="476.5" r="18.5"/><circle cx="994" cy="476.5" r="18.5"/><circle cx="987" cy="479.5" r="18.5"/><circle cx="996" cy="479.5" r="18.5"/><circle cx="991" cy="481.5" r="18.5"/></g><rect x="986.5" y="473.5" width="10" height="4.5" fill="#fff" stroke="#2a6cff" stroke-width="1"/><path d="M991 478V500" stroke="#2a55ff" stroke-width="2.6"/><path d="M991 478V500" stroke="#fff" stroke-width="1.6" stroke-dasharray="3 1.5"/><path d="M963 501.2H1019" stroke="#2a6cff" stroke-width="2.4"/><path d="M969 500.8H1013" stroke="#fff" stroke-width="1.5" stroke-dasharray="2.5 1"/><path d="M985 497.5H997" stroke="#7aa0ff" stroke-width="1" stroke-dasharray="2 1.5"/><circle cx="875.7" cy="473.5" r="36.6" fill="none" stroke="#dc1e1e" stroke-width="1.5"/><g fill="none" stroke="#e0a526" stroke-width="1.5"><rect x="839.3" y="436.8" width="73" height="73.5"/><path d="M801.5 473H948.5"/></g><path d="M875.7 181V825" stroke="#e01c14" stroke-width="1.6"/><g fill="none" stroke="#f2f2f2" stroke-width="1.2"><path d="M992 413.5H1075M1033.5 373V455"/><rect x="1027.5" y="407.5" width="12" height="12" fill="#212830"/><path d="M1027.5 413.5H1039.5M1033.5 407.5V419.5"/></g><g fill="none" stroke="#f6f6f6" stroke-width="1.5"><path d="M445 746.5V800M450.5 806.5H505"/><rect x="439.8" y="800.8" width="10.5" height="10.5"/><path d="M445 800.8V806.5H450.3"/><path d="M447 726.5L454.5 734L462 726.5M454.5 734V742"/><path d="M510 790L524.5 804.5M524.5 790L510 804.5"/></g><circle cx="1519.6" cy="283.3" r="48.6" fill="none" stroke="#484d55" stroke-width="12.4"/><rect x="1496.8" y="260.3" width="46.7" height="46.5" fill="#bcbcbc"/><rect x="1506" y="269" width="28.6" height="28.5" fill="#a9acb1"/><g font-family="Liberation Sans, sans-serif" font-weight="bold" fill="#b9b9b9" text-anchor="middle" font-size="19"><text x="1520" y="240">N</text><text x="1520" y="341.5">S</text><text x="1469" y="291">W</text><text x="1571" y="291">E</text></g><text x="1520.3" y="288" font-family="Liberation Sans, sans-serif" font-weight="bold" fill="#5a5d62" text-anchor="middle" font-size="12.5" textLength="20" lengthAdjust="spacingAndGlyphs">TOP</text><rect x="1491.3" y="363.8" width="57.3" height="18.4" rx="4" fill="#858890"/><text x="1496.5" y="377.6" font-family="Liberation Sans, sans-serif" fill="#6a6e76" font-size="13" textLength="28" lengthAdjust="spacingAndGlyphs">WCS</text><path d="M1531.5 369.5h10l-5 7z" fill="none" stroke="#6f737b" stroke-width="1.2"/><g fill="none" stroke="#ececec" stroke-width="2"><path d="M1523.5 200.5H1535.5" stroke-width="2.6"/><rect x="1548" y="195" width="8.5" height="7.5"/><path d="M1551 195V192.3H1559.5V199.5H1556.5" stroke-width="1.6"/><path d="M1572 193.2L1581.5 202.5M1581.5 193.2L1572 202.5" stroke-width="2.4"/></g><rect x="1552.8" y="413.5" width="39.5" height="254.5" rx="4" fill="#52575e"/><g fill="none" stroke="#464b52" stroke-width="1.6"><circle cx="1587" cy="421" r="2.6" stroke-width="1"/><circle cx="1587" cy="660" r="2.6" stroke-width="1"/><path d="M1561 441a11 11 0 0 1 11-5h12v12a12 12 0 1 1-23-7z"/><circle cx="1572" cy="452" r="7"/><circle cx="1572" cy="452" r="3.2"/><g transform="translate(1572,500) scale(.82) translate(-1572,-497)" fill="#494e55"><path d="M1563 503c-3-5-6-8-3-10s5 2 6 4v-12c0-3 4-3 4 0v-4c0-3 4-3 4 0v3c0-3 4-3 4 0v4c0-3 4-2.5 4 0v12c0 6-3 9-5 10h-13z"/></g><path d="M1560 522l18 18M1578 522l-18 18M1560 522h5M1560 522v5M1578 522h-5M1578 522v5M1560 540h5M1560 540v-5"/><circle cx="1580" cy="538" r="4.5" fill="#52575e"/><path d="M1583 541.5l4 4" stroke-width="2.4"/><ellipse cx="1572" cy="582" rx="11.5" ry="4.5"/><rect x="1569" y="569" width="6" height="24" rx="3" fill="#52575e"/><circle cx="1572" cy="572" r="3.4" fill="#52575e"/><rect x="1558.5" y="617" width="6" height="6" stroke-width="1"/><rect x="1568.5" y="617" width="6" height="6" stroke-width="1"/><rect x="1578.5" y="617" width="6" height="6" stroke-width="1"/><rect x="1558.5" y="627" width="20" height="16" stroke-width="1.2"/></g><g fill="#464b52"><path d="M1568 473h7l-3.5 4zM1568 556h7l-3.5 4zM1568 601.5h7l-3.5 4zM1564 630.5v9l9-4.5z"/></g><rect x="500" y="756.7" width="735.5" height="30.6" rx="2" fill="rgba(200,203,205,0.737)"/><rect x="500" y="756.7" width="64.5" height="30.6" rx="2" fill="#505356"/><g fill="#8a8d90"><rect x="506" y="761" width="1.2" height="1.2"/><rect x="506" y="764" width="1.2" height="1.2"/><rect x="506" y="767" width="1.2" height="1.2"/><rect x="506" y="770" width="1.2" height="1.2"/><rect x="506" y="773" width="1.2" height="1.2"/><rect x="506" y="776" width="1.2" height="1.2"/><rect x="506" y="779" width="1.2" height="1.2"/><rect x="506" y="782" width="1.2" height="1.2"/><rect x="508.5" y="761" width="1.2" height="1.2"/><rect x="508.5" y="764" width="1.2" height="1.2"/><rect x="508.5" y="767" width="1.2" height="1.2"/><rect x="508.5" y="770" width="1.2" height="1.2"/><rect x="508.5" y="773" width="1.2" height="1.2"/><rect x="508.5" y="776" width="1.2" height="1.2"/><rect x="508.5" y="779" width="1.2" height="1.2"/><rect x="508.5" y="782" width="1.2" height="1.2"/></g><path d="M519.5 767.5L528.5 776.5M528.5 767.5L519.5 776.5" stroke="#c9cbcd" stroke-width="2.4" fill="none"/><path d="M556 778.5l-7.5-7.5" stroke="#c4c6c8" stroke-width="3.4" stroke-linecap="round" fill="none"/><path d="M549.5 765.5a4.5 4.5 0 1 0 2.5 7.5l-3-1-1-3 2.5-2.5z" fill="#c4c6c8"/><rect x="571" y="763.5" width="17" height="15.5" rx="1.5" fill="#8c8f91" stroke="#6d7073" stroke-width="1.2"/><path d="M574.5 767.5l4.5 3.5-4.5 3.5M580.5 775.5h5" stroke="#55585b" stroke-width="1.4" fill="none"/><path d="M592.5 769.5h6.5l-3.25 3.6z" fill="#6d7073"/><text x="608" y="776" font-family="Liberation Mono, monospace" font-style="italic" fill="#72767a" font-size="13.5" textLength="117" lengthAdjust="spacing" xml:space="preserve">Type a command</text><path d="M1221.5 774.5h9l-4.5-5z" fill="#2a2a2a"/><text x="432" y="200.3" font-family="Liberation Sans, sans-serif" font-weight="bold" fill="#dcdcdc" font-size="13" textLength="150" lengthAdjust="spacing">[−][Top][2D Wireframe]</text></svg>
<div style="left:428px;top:826px;width:18px;height:18px;background:#f4f4f4;border:1px solid #c8c8c8;"></div>
<div style="left:446px;top:826px;width:18px;height:18px;background:#f4f4f4;border:1px solid #c8c8c8;"></div>
<div style="left:464px;top:826px;width:18px;height:18px;background:#f4f4f4;border:1px solid #c8c8c8;"></div>
<div style="left:482px;top:826px;width:18px;height:18px;background:#f4f4f4;border:1px solid #c8c8c8;"></div>
<svg style="left:0px;top:0px;" width="1638" height="872" viewBox="0 0 1638 872"><g fill="#6a6a6a"><path d="M441 831v10l-6-5zM433.5 831h1.6v10h-1.6z"/><path d="M458 831v10l-6-5z"/><path d="M470 831v10l6-5z"/><path d="M488 831v10l6-5zM494.5 831h1.6v10h-1.6z"/></g><path d="M500 825h63l-6.5 17.5h-47z" fill="#212830"/><path d="M560 843.5l2-3.5 6-14.5M622 843.5l2-3.5 6-14.5M686 843.5l6-18" fill="none" stroke="#333" stroke-width="1"/></svg>
<span style="left:513.0px;top:827.7px;font-size:14.5px;line-height:14.5px;color:#e6e6e6;letter-spacing:-0.898px;">Model</span>
<span style="left:568.0px;top:827.7px;font-size:14.5px;line-height:14.5px;color:#222;letter-spacing:-0.943px;">Layout1</span>
<span style="left:634.0px;top:827.7px;font-size:14.5px;line-height:14.5px;color:#222;letter-spacing:-0.800px;">Layout2</span>
<div style="left:1598px;top:178px;width:38px;height:668px;background:#6e6e6e;"></div>
<div style="left:1603px;top:178px;width:29px;height:663px;background:#f0f0f0;border-left:1px solid #fafafa;"></div>
<div style="left:1603px;top:178px;width:29px;height:11px;background:#585858;"></div>
<svg style="left:0px;top:0px;" width="1638" height="872" viewBox="0 0 1638 872"><g fill="#1c1c1c"><rect x="1609.0" y="181.5" width="1.3" height="1.3"/><rect x="1609.0" y="184" width="1.3" height="1.3"/><rect x="1611.2" y="181.5" width="1.3" height="1.3"/><rect x="1611.2" y="184" width="1.3" height="1.3"/><rect x="1613.4" y="181.5" width="1.3" height="1.3"/><rect x="1613.4" y="184" width="1.3" height="1.3"/><rect x="1615.6" y="181.5" width="1.3" height="1.3"/><rect x="1615.6" y="184" width="1.3" height="1.3"/><rect x="1617.8" y="181.5" width="1.3" height="1.3"/><rect x="1617.8" y="184" width="1.3" height="1.3"/><rect x="1620.0" y="181.5" width="1.3" height="1.3"/><rect x="1620.0" y="184" width="1.3" height="1.3"/><rect x="1622.2" y="181.5" width="1.3" height="1.3"/><rect x="1622.2" y="184" width="1.3" height="1.3"/><rect x="1624.4" y="181.5" width="1.3" height="1.3"/><rect x="1624.4" y="184" width="1.3" height="1.3"/></g><path d="M1607 534.5H1629" stroke="#b8b8b8" stroke-width="1"/><path d="M1607 568.5H1629" stroke="#b8b8b8" stroke-width="1"/><path d="M1607 654.5H1629" stroke="#b8b8b8" stroke-width="1"/><g transform="translate(1617.5,202)"><path d="M-6 -6l6 9 8-11-3 13z" fill="#bcdcf2"/><path d="M-8 9V-9H9" fill="none" stroke="#555b63" stroke-width="1.8"/><path d="M-6 -7L6 6M8 -7L-6 4" stroke="#4a7fb0" stroke-width="1.4"/></g><g transform="translate(1617.5,229)"><path d="M-8 8V-4L2 0z" fill="#bcdcf2"/><path d="M-8 8V-9M-8 8H9" stroke="#3a3d42" stroke-width="1.6" stroke-dasharray="2.5 1.8" fill="none"/><path d="M-8 8L6 -6" stroke="#3a3d42" stroke-width="1.8"/><path d="M-8 -4A14 14 0 0 1 2 0" stroke="#6aa0d0" fill="none"/></g><g transform="translate(1617.5,255)"><path d="M-4 -8A13 13 0 0 1 6 5L-4 -1z" fill="#bcdcf2" stroke="#6aa0d0"/><path d="M-5 -9V9" stroke="#3a3d42" stroke-width="1.6" stroke-dasharray="2.5 1.8"/><path d="M-4 -1L6 7" stroke="#3a3d42" stroke-width="1.6"/></g><g transform="translate(1617.5,281)"><path d="M-5 7L-4 -6 5 -2z" fill="#bcdcf2"/><path d="M-5 -9V9" stroke="#3a3d42" stroke-width="1.6" stroke-dasharray="2.5 1.8"/><path d="M-5 7L7 -6M-5 -6L3 1" stroke="#3a3d42" stroke-width="1.6" fill="none"/></g><g transform="translate(1617.5,307)"><path d="M-7 -8h9l4 4v12h-13z" fill="#f4f4f4" stroke="#3a3d42" stroke-width="1.4"/><path d="M-4 -8v16M2 -8v4h4" fill="none" stroke="#3a3d42" stroke-width="1.2"/><rect x="1" y="1" width="8" height="8" fill="#e8e8e8" stroke="#3a3d42" stroke-width="1"/><path d="M1 3.7h8M1 6.4h8M3.7 1v8M6.4 1v8" stroke="#3a3d42" stroke-width=".8"/></g><g transform="translate(1617.5,334)"><circle cx="-1" cy="0" r="8.5" fill="#7fb4d6" stroke="#3a3d42" stroke-width="1.4"/><path d="M-6 -4q4-3 8 0M-4 3q3 2 5 0" stroke="#3b8a4a" stroke-width="1.6" fill="none"/><rect x="1" y="2" width="8" height="8" fill="#e8e8e8" stroke="#3a3d42" stroke-width="1"/><path d="M1 4.7h8M1 7.4h8M3.7 2v8M6.4 2v8" stroke="#3a3d42" stroke-width=".8"/></g><g transform="translate(1617.5,360)"><circle cx="0" cy="0" r="8" fill="#c8ccd0" stroke="#3a3d42" stroke-width="1.5"/><path d="M0 -8V8M-8 0H8M-5.5 -5.5q5.5 5.5 0 11M5.5 -5.5q-5.5 5.5 0 11" fill="none" stroke="#f4f4f4" stroke-width="1.1"/><rect x="-5" y="-4" width="3" height="3" fill="#3b8a4a"/></g><g transform="translate(1617.5,387)"><g transform="translate(-1,-1)"><path d="M0 -8V8M-8 0H8" stroke="#3a3d42" stroke-width="4.400"/><path d="M0 -6.800V6.800M-6.800 0H6.800" stroke="#f4f4f4" stroke-width="2"/><circle r="4.400" fill="#f4f4f4" stroke="#3a3d42" stroke-width="1.300"/><circle r="1.900" fill="#f4f4f4" stroke="#3a3d42" stroke-width="1.200"/></g><path d="M3 5h6M3 8h6M4.8 3.5v6M7.2 3.5v6" stroke="#3a3d42" stroke-width="1.2"/></g><g transform="translate(1617.5,413)"><g transform="translate(-1,-1)"><path d="M0 -8V8M-8 0H8" stroke="#3a3d42" stroke-width="4.400"/><path d="M0 -6.800V6.800M-6.800 0H6.800" stroke="#f4f4f4" stroke-width="2"/><circle r="4.400" fill="#f4f4f4" stroke="#3a3d42" stroke-width="1.300"/><circle r="1.900" fill="#f4f4f4" stroke="#3a3d42" stroke-width="1.200"/></g><text x="2.5" y="9.5" font-family="Liberation Sans,sans-serif" font-weight="bold" font-size="9" fill="#3a3d42">A</text></g><g transform="translate(1617.5,439)"><g transform="translate(-1,-1)"><path d="M0 -8V8M-8 0H8" stroke="#3a3d42" stroke-width="4.400"/><path d="M0 -6.800V6.800M-6.800 0H6.800" stroke="#f4f4f4" stroke-width="2"/><circle r="4.400" fill="#f4f4f4" stroke="#3a3d42" stroke-width="1.300"/><circle r="1.900" fill="#f4f4f4" stroke="#3a3d42" stroke-width="1.200"/></g><path d="M1 -3l7 6.5-3 .3 1.8 3.2-1.5.8-1.8-3.2-2.2 2z" fill="#f4f4f4" stroke="#3a3d42" stroke-width="1"/></g><g transform="translate(1617.5,465)"><g transform="translate(-1,-1)"><path d="M0 -8V8M-8 0H8" stroke="#3a3d42" stroke-width="4.400"/><path d="M0 -6.800V6.800M-6.800 0H6.800" stroke="#f4f4f4" stroke-width="2"/><circle r="4.400" fill="#f4f4f4" stroke="#3a3d42" stroke-width="1.300"/><circle r="1.900" fill="#f4f4f4" stroke="#3a3d42" stroke-width="1.200"/></g><circle cx="3" cy="3" r="3.2" fill="#f4f4f4" stroke="#3a3d42" stroke-width="1.3"/><path d="M5.5 5.5l3.5 3.5" stroke="#3a3d42" stroke-width="2.2"/></g><g transform="translate(1617.5,491)"><path d="M-2 6L2 -6h7v7z" fill="#bcdcf2" stroke="#2f7fd0" stroke-width="1.2"/><path d="M-7 -9V9" stroke="#3a3d42" stroke-width="1.6" stroke-dasharray="2.5 1.8"/><path d="M-3 7L6 -3" stroke="#3a3d42" stroke-width="1.3"/></g><g transform="translate(1617.5,517)"><path d="M-4 -6V9" stroke="#c62828" stroke-width="1.8"/><circle cx="-4" cy="-6" r="2.4" fill="#f4f4f4" stroke="#c62828" stroke-width="1.4"/><path d="M-9 -6h3M-1.5 -6h3" stroke="#3a3d42" stroke-width="1.3"/><path d="M3 -6a5 5 0 0 1 0 10h-3" fill="none" stroke="#3a5f8a" stroke-width="1.4" stroke-dasharray="3 1.4"/></g><g transform="translate(1617.5,551)"><g transform="translate(0,-2) scale(.8)"><g transform="translate(-1,-1)"><path d="M0 -8V8M-8 0H8" stroke="#3a3d42" stroke-width="4.400"/><path d="M0 -6.800V6.800M-6.800 0H6.800" stroke="#f4f4f4" stroke-width="2"/><circle r="4.400" fill="#f4f4f4" stroke="#3a3d42" stroke-width="1.300"/><circle r="1.900" fill="#f4f4f4" stroke="#3a3d42" stroke-width="1.200"/></g></g><path d="M-8 1h8l-3 4v3h-2v-3z" fill="#d0d0d0" stroke="#3a3d42" stroke-width="1.1"/><path d="M2 1l5 5-2 .2 1 2" stroke="#3a3d42" stroke-width="1.1" fill="none"/><path d="M9 5v4h-4z" fill="#111"/></g><g transform="translate(1617.5,586)"><path d="M-4 -9v4" stroke="#c62828" stroke-width="1.8"/><circle cx="-4" cy="-2" r="2.4" fill="#f4f4f4" stroke="#c62828" stroke-width="1.4"/><path d="M-9 -2h3M-1.5 -2h3" stroke="#3a3d42" stroke-width="1.3"/><path d="M2 -2a5 5 0 0 1 0 10h-4" fill="none" stroke="#3a5f8a" stroke-width="1.4" stroke-dasharray="3 1.4"/></g><g transform="translate(1617.5,612)"><path d="M-7 -3v-3l4-3 4 3v3z" fill="#d8d8d8" stroke="#3a3d42" stroke-width="1.3"/><path d="M-6 -5l3 2 3-2" stroke="#3a3d42" fill="none"/><circle cx="-3" cy="4" r="2.2" fill="#f4f4f4" stroke="#c62828" stroke-width="1.3"/><path d="M-9 4h3M-.5 4h3" stroke="#3a3d42" stroke-width="1.2"/><path d="M3 4q5 0 5 5" stroke="#3a3d42" stroke-width="1.3" fill="none"/></g><g transform="translate(1617.5,638)"><g transform="translate(-2,-5) scale(.62)"><g transform="translate(-1,-1)"><path d="M0 -8V8M-8 0H8" stroke="#3a3d42" stroke-width="4.400"/><path d="M0 -6.800V6.800M-6.800 0H6.800" stroke="#f4f4f4" stroke-width="2"/><circle r="4.400" fill="#f4f4f4" stroke="#3a3d42" stroke-width="1.300"/><circle r="1.900" fill="#f4f4f4" stroke="#3a3d42" stroke-width="1.200"/></g></g><circle cx="-3" cy="5" r="2.2" fill="#f4f4f4" stroke="#c62828" stroke-width="1.3"/><path d="M-9 5h3M-.5 5h3" stroke="#3a3d42" stroke-width="1.2"/><path d="M3 5q5 0 5 4" stroke="#3a3d42" stroke-width="1.3" fill="none"/></g><g transform="translate(1617.5,672)"><path d="M-8 -9V8H9" stroke="#3a3d42" stroke-width="1.5" stroke-dasharray="2.5 1.8" fill="none"/><path d="M-8 -3H4V7" stroke="#2f7fd0" stroke-width="1.6" fill="none"/><rect x="2.5" y="-4.5" width="3.2" height="3.2" fill="#f4f4f4" stroke="#3a3d42"/></g><g transform="translate(1617.5,698)"><path d="M-8 8L3 -3v11z" fill="#bcdcf2"/><path d="M-8 -2V8H9" stroke="#3a3d42" stroke-width="1.5" stroke-dasharray="2.5 1.8" fill="none"/><path d="M-8 8L3 -3V8" stroke="#2f7fd0" stroke-width="1.6" fill="none"/><rect x="1.5" y="-4.5" width="3.2" height="3.2" fill="#f4f4f4" stroke="#3a3d42"/><path d="M-8 -4l6-6M-2 -10h-3.5M-2 -10v3.5" stroke="#3a3d42" stroke-width="1.3" fill="none"/></g><g transform="translate(1617.5,724)"><path d="M-8 8L2 -2 -8 -5z" fill="#bcdcf2"/><path d="M-8 -7V8H9M-8 -7H2" stroke="#3a3d42" stroke-width="1.5" stroke-dasharray="2.5 1.8" fill="none"/><path d="M-8 8L2 -2M-2 8L7 -1" stroke="#2f7fd0" stroke-width="1.5" fill="none"/><rect x=".5" y="-6" width="3.2" height="3.2" fill="#f4f4f4" stroke="#3a3d42"/><path d="M7 -1h-3.5M7 -1v3.5" stroke="#3a3d42" stroke-width="1.3" fill="none"/></g><g transform="translate(1617.5,750)"><path d="M-8 7L4 -5" stroke="#2f7fd0" stroke-width="1.5"/><rect x="2.5" y="-7" width="3.2" height="3.2" fill="#f4f4f4" stroke="#3a3d42"/><path d="M-8 -4l6-6M-2 -10h-3.5M-2 -10v3.5" stroke="#3a3d42" stroke-width="1.3" fill="none"/><path d="M-2 7H9M-2 7l2.5-2.5M-2 7l2.5 2.5M9 7l-2.5-2.5M9 7l-2.5 2.5" stroke="#3a3d42" stroke-width="1.3" fill="none"/></g><g transform="translate(1617.5,776)"><circle cx="-1" cy="-1" r="8" fill="#f4f4f4" stroke="#555" stroke-width="1.5"/><path d="M-1 -1l-5-5M-6 -6h3.5M-6 -6v3.5" stroke="#3a3d42" stroke-width="1.3" fill="none"/><path d="M-1 4l6-1 4-5 1 3-3 6-6 2z" fill="#b0700f"/><path d="M6 -1l3-3" stroke="#7aa0c8" stroke-width="2"/></g><g transform="translate(1617.5,803)"><path d="M-6 1l7-2 5-4 1 4-4 6-7 2z" fill="#b0700f"/><path d="M-9 2l4 7M4 -9l5 6M-7 5L6 -6" stroke="#3a3d42" stroke-width="1.4" fill="none"/><path d="M2 -8l4 5" stroke="#7aa0c8" stroke-width="2"/></g><g transform="translate(1617.5,830)"><path d="M-8 8Q-7 -6 8 -8" fill="none" stroke="#3a3d42" stroke-width="1.4"/><rect x="-9.5" y="6.5" width="3" height="3" fill="#f4f4f4" stroke="#3a3d42"/><rect x="6.5" y="-9.5" width="3" height="3" fill="#f4f4f4" stroke="#3a3d42"/><rect x="0" y="-2" width="8" height="11" rx="1" fill="#9cc4ea" stroke="#2f5f9a" stroke-width="1.2"/><rect x="2" y="0" width="4" height="2.5" fill="#f4f4f4"/><path d="M2 5h1.5M4.5 5H6M2 7h1.5M4.5 7H6" stroke="#1d3f6a" stroke-width="1.2"/></g></svg>
<div style="left:0px;top:842px;width:395px;height:4px;background:linear-gradient(#3e3e3e,#5e5e5e);"></div>
<div style="left:2px;top:846px;width:1634px;height:26px;background:linear-gradient(#6a6a6a 0,#8c8c8c 2px,#868686 60%,#7a7a7a);"></div>
<div style="left:2px;top:846px;width:231px;height:26px;background:linear-gradient(#6a6a6a 0,#9a9a9a 2px,#8e8e8e 60%,#838383);border-right:1px solid #5e5e5e;"></div>
<div style="left:425px;top:845.5px;width:1213px;height:1.5px;background:#1e1e1e;"></div>
<span style="left:16.0px;top:852.9px;font-size:15.5px;line-height:15.5px;color:#0c0c0c;transform-origin:0 0;transform:scaleX(0.8318);">22270.4698, 20605.2467, 0.0000</span>
<div class="sbg" style="left:237px;top:847px;width:26px;height:25px;"></div>
<div class="sbg" style="left:263px;top:847px;width:26px;height:25px;"></div>
<div class="sbg" style="left:289px;top:847px;width:27px;height:25px;"></div>
<div class="sbg" style="left:316px;top:847px;width:26px;height:25px;"></div>
<div class="sbg" style="left:342px;top:847px;width:26px;height:25px;"></div>
<div class="sbb" style="left:368px;top:847px;width:27px;height:25px;"></div>
<div class="sbg" style="left:395px;top:847px;width:26px;height:25px;"></div>
<div class="sbb" style="left:421px;top:847px;width:26px;height:25px;"></div>
<div class="sbb" style="left:447px;top:847px;width:26px;height:25px;"></div>
<div class="sbg" style="left:473px;top:847px;width:26px;height:25px;"></div>
<div class="sbb" style="left:499px;top:847px;width:26px;height:25px;"></div>
<div class="sbg" style="left:525px;top:847px;width:26px;height:25px;"></div>
<div class="sbg" style="left:551px;top:847px;width:26px;height:25px;"></div>
<div class="sbb" style="left:577px;top:847px;width:26px;height:25px;"></div>
<div class="sbg" style="left:603px;top:847px;width:26px;height:25px;"></div>
<svg style="left:0px;top:0px;" width="1638" height="872" viewBox="0 0 1638 872"><g transform="translate(250.0,859.5)"><path d="M-4 -8V7M-11 -3H3" stroke="#444" stroke-width="1.6"/><rect x="-6.5" y="-5.5" width="5" height="5" fill="#666" stroke="#333" stroke-width="1"/><circle cx="1.5" cy="6.5" r="2" fill="#fff" stroke="#d06030" stroke-width="1.2"/><text x="3" y="6" font-size="9" font-weight="bold" fill="#3a6a9a" font-family="Liberation Sans,sans-serif">P</text></g><g transform="translate(276.0,859.5)"><rect x="-7" y="-7" width="1.3" height="1.3" fill="#444"/><rect x="-7" y="-4" width="1.3" height="1.3" fill="#444"/><rect x="-7" y="-1" width="1.3" height="1.3" fill="#444"/><rect x="-7" y="2" width="1.3" height="1.3" fill="#444"/><rect x="-4" y="-7" width="1.3" height="1.3" fill="#444"/><rect x="-4" y="-4" width="1.3" height="1.3" fill="#444"/><rect x="-4" y="-1" width="1.3" height="1.3" fill="#444"/><rect x="-4" y="2" width="1.3" height="1.3" fill="#444"/><rect x="-1" y="-7" width="1.3" height="1.3" fill="#444"/><rect x="-1" y="-4" width="1.3" height="1.3" fill="#444"/><rect x="-1" y="-1" width="1.3" height="1.3" fill="#444"/><rect x="-1" y="2" width="1.3" height="1.3" fill="#444"/><rect x="2" y="-7" width="1.3" height="1.3" fill="#444"/><rect x="2" y="-4" width="1.3" height="1.3" fill="#444"/><rect x="2" y="-1" width="1.3" height="1.3" fill="#444"/><rect x="2" y="2" width="1.3" height="1.3" fill="#444"/><path d="M-7 6.5H3" stroke="#111" stroke-width="1.6"/><path d="M5 -6V6" stroke="#111" stroke-width="1.6" stroke-dasharray="2 1.2"/></g><g transform="translate(302.5,859.5)"><rect x="-9" y="-9" width="18" height="18" fill="#fafafa" stroke="#555" stroke-width="1"/><path d="M-9 -5.4h18M-9 -1.8h18M-9 1.8h18M-9 5.4h18M-5.4 -9v18M-1.8 -9v18M1.8 -9v18M5.4 -9v18" stroke="#444" stroke-width="1.7"/></g><g transform="translate(329.0,859.5)"><path d="M-9 -9V8.5H9" fill="none" stroke="#555" stroke-width="1.6"/><path d="M-9 1h7.5v7.5" fill="none" stroke="#666" stroke-width="1.1"/></g><g transform="translate(355.0,859.5)"><circle cx="-1" cy="2" r="6.5" fill="none" stroke="#444" stroke-width="1.4"/><path d="M-1 2h9M-1 2L7 -6M3 -2.2q1.5 2 1.5 4.2" fill="none" stroke="#222" stroke-width="1.5"/></g><g transform="translate(381.5,859.5)"><rect x="-6.5" y="-6.5" width="15" height="15" fill="#f2f2f2" stroke="#555" stroke-width="1.5"/><circle cx="-8" cy="-8" r="2.2" fill="#fff" stroke="#d06030" stroke-width="1.1"/></g><g transform="translate(408.0,859.5)"><path d="M-7 -4l4-5h12v12l-4 5h-12z" fill="#e8e8e8" stroke="#666" stroke-width="1.3"/><path d="M-7 -4h12v12M5 -4l4-5" fill="none" stroke="#888" stroke-width="1"/><circle cx="-8" cy="7.5" r="2.3" fill="#fff" stroke="#d06030" stroke-width="1.1"/></g><g transform="translate(434.0,859.5)"><path d="M7 -5L-8 6H7" fill="none" stroke="#333" stroke-width="1.5"/><path d="M0 .5q2 2.5 2 5" fill="none" stroke="#333" stroke-width="1.2"/></g><g transform="translate(460.0,859.5)"><path d="M-8 -9V8H9M-8 8L5 -5" fill="none" stroke="#2a4a5a" stroke-width="1.4"/><path d="M-8 -9l-2 3h4zM9 8l-3-2v4zM5 -5l-3.5 1 2.5 2.5z" fill="#2a4a5a"/><path d="M3 -10l4 1-2 3 3 0-5 5 1-4-3 0z" fill="#e8a820"/></g><g transform="translate(486.0,859.5)"><path d="M-8.500 -1H0M-4.200 -5.500V3.500" stroke="#111" stroke-width="1.600"/><rect x="0" y="1.500" width="7" height="3.500" fill="none" stroke="#111" stroke-width="1.400"/></g><g transform="translate(512.0,859.5)"><path d="M-8 0H8M0 -8V8" stroke="#111" stroke-width="2.1"/></g><g transform="translate(538.0,859.5)"><rect x="-9" y="-9" width="18" height="18" fill="#9cc8f4" stroke="#3f7fd0" stroke-width="1.6"/><rect x="-7" y="-7" width="2" height="2" fill="#d8ecff"/><rect x="-7" y="-3" width="2" height="2" fill="#d8ecff"/><rect x="-7" y="1" width="2" height="2" fill="#d8ecff"/><rect x="-7" y="5" width="2" height="2" fill="#d8ecff"/><rect x="-3" y="-7" width="2" height="2" fill="#d8ecff"/><rect x="-3" y="-3" width="2" height="2" fill="#d8ecff"/><rect x="-3" y="1" width="2" height="2" fill="#d8ecff"/><rect x="-3" y="5" width="2" height="2" fill="#d8ecff"/><rect x="1" y="-7" width="2" height="2" fill="#d8ecff"/><rect x="1" y="-3" width="2" height="2" fill="#d8ecff"/><rect x="1" y="1" width="2" height="2" fill="#d8ecff"/><rect x="1" y="5" width="2" height="2" fill="#d8ecff"/><rect x="5" y="-7" width="2" height="2" fill="#d8ecff"/><rect x="5" y="-3" width="2" height="2" fill="#d8ecff"/><rect x="5" y="1" width="2" height="2" fill="#d8ecff"/><rect x="5" y="5" width="2" height="2" fill="#d8ecff"/><rect x="-5" y="-5" width="2" height="2" fill="#d8ecff"/><rect x="-5" y="-1" width="2" height="2" fill="#d8ecff"/><rect x="-5" y="3" width="2" height="2" fill="#d8ecff"/><rect x="-1" y="-5" width="2" height="2" fill="#d8ecff"/><rect x="-1" y="-1" width="2" height="2" fill="#d8ecff"/><rect x="-1" y="3" width="2" height="2" fill="#d8ecff"/><rect x="3" y="-5" width="2" height="2" fill="#d8ecff"/><rect x="3" y="-1" width="2" height="2" fill="#d8ecff"/><rect x="3" y="3" width="2" height="2" fill="#d8ecff"/></g><g transform="translate(564.0,859.5)"><rect x="-4.5" y="-6" width="9" height="12" rx="1" fill="#f4f4f4" stroke="#111" stroke-width="1.6"/><path d="M-4 -2h8M-4 2h8M0 -2v8" stroke="#111" stroke-width="1.2"/></g><g transform="translate(590.0,859.5)"><path d="M-10 -6h8M-6 -10v8" stroke="#2a4a5a" stroke-width="1.5"/><rect x="-4" y="-3" width="9" height="9" fill="#cfe6ef" stroke="#2a4a5a" stroke-width="1.3"/><rect x="0" y="1" width="9" height="9" rx="1" fill="#7cc060" stroke="#3a7a2a" stroke-width="1.3"/></g><g transform="translate(616.0,859.5)"><path d="M-3.5 -10h7v6.5h6.5v7h-6.5v6.5h-7v-6.5h-6.5v-7h6.5z" fill="#fff" stroke="#444" stroke-width="1.5"/></g></svg>
<div class="sbg" style="left:1215px;top:847px;width:53px;height:25px;"></div>
<div class="sbg" style="left:1268px;top:847px;width:26px;height:25px;"></div>
<div class="sbg" style="left:1294px;top:847px;width:26px;height:25px;"></div>
<div class="sbg" style="left:1335px;top:847px;width:82px;height:25px;"></div>
<div class="sbg" style="left:1417px;top:847px;width:26px;height:25px;"></div>
<div class="sbg" style="left:1443px;top:847px;width:25px;height:25px;"></div>
<div class="sbg" style="left:1478px;top:847px;width:25px;height:25px;"></div>
<div class="sbg" style="left:1503px;top:847px;width:27px;height:25px;"></div>
<div class="sbg" style="left:1530px;top:847px;width:27px;height:25px;"></div>
<div class="sbg" style="left:1557px;top:847px;width:38px;height:25px;"></div>
<div class="sbg" style="left:1595px;top:847px;width:13px;height:25px;"></div>
<div class="sbg" style="left:1608px;top:847px;width:27px;height:25px;"></div>
<span style="left:1219.0px;top:852.9px;font-size:15.5px;line-height:15.5px;color:#111;transform-origin:0 0;transform:scaleX(0.8164);">MODEL</span>
<span style="left:1360.5px;top:852.9px;font-size:15.5px;line-height:15.5px;color:#111;transform-origin:0 0;transform:scaleX(0.8121);">1:1000</span>
<svg style="left:0px;top:0px;" width="1638" height="872" viewBox="0 0 1638 872"><path d="M1401.5 856h9l-4.5 5.5z" fill="#111"/><path d="M1597.5 858h8l-4 5z" fill="#111"/><rect x="1273.5" y="851.5" width="14" height="13" fill="#e8e8e8" stroke="#444" stroke-width="1.2"/><path d="M1277 854v8h7z" fill="#555"/><path d="M1271 867.5h19" stroke="#555" stroke-width="1.4"/><rect x="1298.5" y="851.5" width="8" height="9" fill="#e8e8e8" stroke="#444" stroke-width="1.2"/><rect x="1307.5" y="851.5" width="8" height="9" fill="#e8e8e8" stroke="#444" stroke-width="1.2"/><path d="M1298 864.5h18" stroke="#555" stroke-width="2"/><path d="M1347.5 851l2.5 8 5.5 5.5-1.5 1.5-6.5-4.5-6.5 4.5-1.5-1.5 5.5-5.5z" fill="#f0f0f0" stroke="#444" stroke-width="1.2"/><path d="M1428 851l2.5 8 5.5 5.5-1.5 1.5-6.5-4.5-6.5 4.5-1.5-1.5 5.5-5.5z" fill="#f0f0f0" stroke="#444" stroke-width="1.2"/><path d="M1434 858a3 3 0 0 1 6 0c0 2-1.5 2.5-1.5 4.5h-3c0-2-1.5-2.500-1.5-4.500z" fill="#ffe27a" stroke="#a07a10" stroke-width=".8"/><path d="M1454 851l2.5 8 5.5 5.5-1.5 1.5-6.5-4.5-6.5 4.5-1.5-1.5 5.5-5.5z" fill="#b4b4b4" stroke="#909090" stroke-width="1.2"/><path d="M1458 852l3 1-2 3 3 0-4 4 .5-3-2 0z" fill="#a8a8a8"/><g transform="translate(1490,859)"><circle r="6.5" fill="none" stroke="#222" stroke-width="3.4" stroke-dasharray="3.2 1.9"/><circle r="5" fill="#dcdcdc" stroke="#222" stroke-width="1.6"/><circle r="2.2" fill="#9a9a9a" stroke="#222" stroke-width="1.2"/><path d="M9 5v5h-5z" fill="#111"/></g><g transform="translate(1514,860)"><rect x="-7" y="-1" width="12" height="9" fill="#e8e8e8" stroke="#222" stroke-width="1.5"/><path d="M-1 1.500v4.500" stroke="#222" stroke-width="1.6"/><path d="M2 -1v-4a4 4 0 0 1 8 0v3" fill="none" stroke="#222" stroke-width="1.7"/></g><g transform="translate(1543,859)"><rect x="-10" y="-7" width="15" height="9" fill="#9ab0c8" stroke="#333" stroke-width="1.2"/><path d="M-8 -8.500v-2M-4 -8.500v-2M0 -8.500v-2M4 -8.500v-2M-8 3.500v2M-4 3.500v2" stroke="#333" stroke-width="1.2"/><path d="M2 1a4 4 0 0 1 8 0c0 2.500-2 3-2 5.500h-4c0-2.500-2-3-2-5.500z" fill="#ffd95a" stroke="#a07a10" stroke-width=".9"/></g><rect x="1562" y="850" width="27" height="22" fill="#959595" stroke="#7a7a7a" stroke-width="1"/><g transform="translate(1575.500,859)"><path d="M-5.500 -2a5.500 5.500 0 0 1 11 0c0 3.500-2.500 4-2.500 7.500h-6c0-3.500-2.500-4-2.500-7.500z" fill="#fff2b0" stroke="#c8a030" stroke-width="1"/><rect x="-2.500" y="6" width="5" height="5" fill="#d8d8d8" stroke="#777" stroke-width=".8"/></g><rect x="1612.500" y="851.500" width="16" height="15" rx="1" fill="#ececec" stroke="#4a4a4a" stroke-width="1.200"/><path d="M1613 853.200h15" stroke="#5a5a5a" stroke-width="2.400"/></svg>
</body></html>
